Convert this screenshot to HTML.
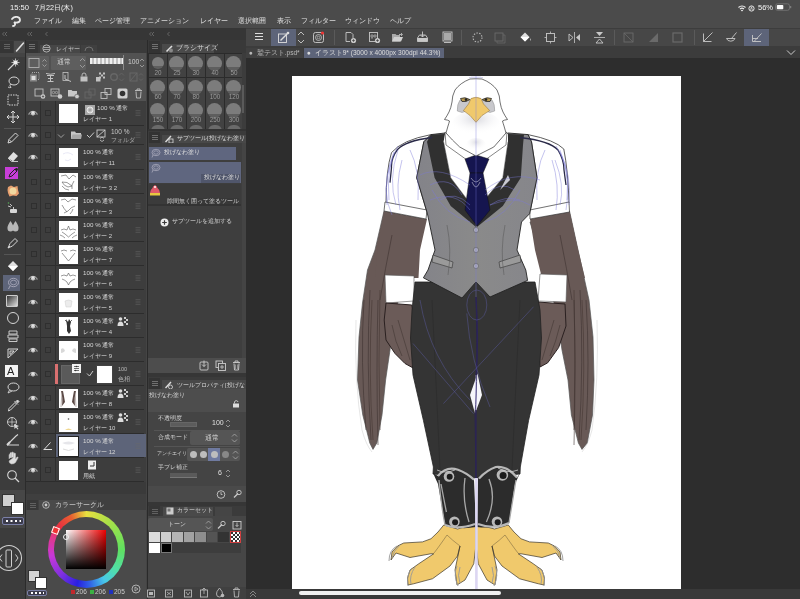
<!DOCTYPE html>
<html><head><meta charset="utf-8">
<style>
*{margin:0;padding:0;box-sizing:border-box}
html,body{width:800px;height:599px;overflow:hidden;background:#2d2d2d;font-family:"Liberation Sans",sans-serif;color:#d8d8d8;position:relative}
.a{position:absolute;display:block}
.t{position:absolute;white-space:nowrap;line-height:1;will-change:transform}
</style></head><body>
<div class="a" style="left:0px;top:0px;width:800px;height:28px;background:#4b4b4b;"></div>
<div class="t" style="left:9.5px;top:3.5px;font-size:7.6px;color:#f4f4f4;">15:50</div>
<div class="t" style="left:35px;top:3.5px;font-size:7.2px;color:#f4f4f4;">7月22日(木)</div>
<svg class="a" style="left:737px;top:3px;" width="20" height="10" viewBox="0 0 20 10"><path d="M1.5 4.5 A5 5 0 0 1 8.5 4.5 M3 6 A3 3 0 0 1 7 6" fill="none" stroke="#eee" stroke-width="1.1"/><path d="M5 8.5 L3.8 7.2 A1.8 1.8 0 0 1 6.2 7.2 Z" fill="#eee"/><circle cx="14.5" cy="5.5" r="2.6" fill="none" stroke="#e8e8e8" stroke-width="1"/><path d="M13.6 6.8 L14.5 3.8 L15.4 6.8" fill="none" stroke="#e8e8e8" stroke-width="0.7"/></svg>
<div class="t" style="left:758px;top:3.5px;font-size:7.5px;color:#f4f4f4;">56%</div>
<svg class="a" style="left:775px;top:3px;" width="18" height="9" viewBox="0 0 18 9"><rect x="0.5" y="0.8" width="14" height="6.5" rx="2" fill="none" stroke="#777" stroke-width="0.8"/><rect x="1.8" y="2" width="6.5" height="4.2" rx="0.8" fill="#fafafa"/><rect x="15.2" y="3" width="1" height="2.2" fill="#888"/></svg>
<svg class="a" style="left:10px;top:16px;" width="12" height="11" viewBox="0 0 12 11"><path d="M2 3 C4 0,10 0,10 4 C10 7,5 7,4 6 C6 8,5 10,3 10" fill="none" stroke="#e8e8e8" stroke-width="1.8" stroke-linecap="round"/></svg>
<div class="t" style="left:34px;top:17.5px;font-size:6.9px;color:#e0e0e0;">ファイル</div>
<div class="t" style="left:72px;top:17.5px;font-size:6.9px;color:#e0e0e0;">編集</div>
<div class="t" style="left:95px;top:17.5px;font-size:6.9px;color:#e0e0e0;">ページ管理</div>
<div class="t" style="left:140px;top:17.5px;font-size:6.9px;color:#e0e0e0;">アニメーション</div>
<div class="t" style="left:200px;top:17.5px;font-size:6.9px;color:#e0e0e0;">レイヤー</div>
<div class="t" style="left:238px;top:17.5px;font-size:6.9px;color:#e0e0e0;">選択範囲</div>
<div class="t" style="left:277px;top:17.5px;font-size:6.9px;color:#e0e0e0;">表示</div>
<div class="t" style="left:301px;top:17.5px;font-size:6.9px;color:#e0e0e0;">フィルター</div>
<div class="t" style="left:345px;top:17.5px;font-size:6.9px;color:#e0e0e0;">ウィンドウ</div>
<div class="t" style="left:390px;top:17.5px;font-size:6.9px;color:#e0e0e0;">ヘルプ</div>
<div class="a" style="left:0px;top:28px;width:246px;height:12px;background:#363636;"></div>
<svg class="a" style="left:1px;top:31px;" width="8" height="6" viewBox="0 0 8 6"><path d="M3.5 1 L1.5 3 L3.5 5 M6 1 L4 3 L6 5" fill="none" stroke="#7a7a7a" stroke-width="0.7"/></svg>
<svg class="a" style="left:26px;top:31px;" width="8" height="6" viewBox="0 0 8 6"><path d="M3.5 1 L1.5 3 L3.5 5 M6 1 L4 3 L6 5" fill="none" stroke="#7a7a7a" stroke-width="0.7"/></svg>
<svg class="a" style="left:148px;top:31px;" width="8" height="6" viewBox="0 0 8 6"><path d="M3.5 1 L1.5 3 L3.5 5 M6 1 L4 3 L6 5" fill="none" stroke="#7a7a7a" stroke-width="0.7"/></svg>
<svg class="a" style="left:44px;top:31px;" width="5" height="6" viewBox="0 0 5 6"><path d="M3.5 1 L1.5 3 L3.5 5" fill="none" stroke="#7a7a7a" stroke-width="0.7"/></svg>
<svg class="a" style="left:166px;top:31px;" width="5" height="6" viewBox="0 0 5 6"><path d="M3.5 1 L1.5 3 L3.5 5" fill="none" stroke="#7a7a7a" stroke-width="0.7"/></svg>
<div class="a" style="left:0px;top:40px;width:25px;height:559px;background:#3c3c3c;"></div>
<div class="a" style="left:0px;top:40px;width:25px;height:13px;background:#3a3a3a;"></div>
<div class="a" style="left:0px;top:41px;width:13px;height:12px;background:#353535;"></div>
<svg class="a" style="left:3px;top:43px;" width="8" height="7" viewBox="0 0 8 7"><path d="M1 1.5H7M1 3.5H7M1 5.5H7" stroke="#666" stroke-width="0.9"/></svg>
<div class="a" style="left:14px;top:41px;width:11px;height:12px;background:#4b4b4b;"></div>
<svg class="a" style="left:14px;top:41px;" width="11" height="12" viewBox="0 0 11 12"><path d="M2.5 10 L9.5 2" stroke="#e0e0e0" stroke-width="1.5" stroke-linecap="round"/></svg>
<div class="a" style="left:0px;top:53px;width:25px;height:4px;background:#444444;"></div>
<div class="a" style="left:25px;top:40px;width:1px;height:559px;background:#2b2b2b;"></div>
<svg class="a" style="left:5.5px;top:58.0px;" width="14" height="14" viewBox="0 0 14 14"><path d="M2 12 L8 6" stroke="#d6d6d6" stroke-width="1.1"/><circle cx="9.5" cy="4.5" r="2.3" fill="#eee"/><path d="M9.5 0.5V2M9.5 7V8.5M5.5 4.5H7M12 4.5H13.5M6.8 1.8L7.8 2.8M11.2 6.2L12.2 7.2M12.2 1.8L11.2 2.8" stroke="#d6d6d6" stroke-width="0.8"/></svg>
<svg class="a" style="left:5.5px;top:75.0px;" width="14" height="14" viewBox="0 0 14 14"><ellipse cx="8" cy="6" rx="5" ry="4" fill="none" stroke="#d6d6d6" stroke-width="1"/><path d="M4.5 9 Q3 11 5 12.5 Q3.5 13 2 12" fill="none" stroke="#d6d6d6" stroke-width="0.9"/></svg>
<svg class="a" style="left:5.5px;top:93.0px;" width="14" height="14" viewBox="0 0 14 14"><rect x="2" y="2" width="10" height="10" fill="none" stroke="#d6d6d6" stroke-width="1" stroke-dasharray="1.5 1"/></svg>
<svg class="a" style="left:5.5px;top:110.0px;" width="14" height="14" viewBox="0 0 14 14"><path d="M7 1V13M1 7H13" stroke="#d6d6d6" stroke-width="1"/><path d="M5 3L7 1L9 3M5 11L7 13L9 11M3 5L1 7L3 9M11 5L13 7L11 9" fill="none" stroke="#d6d6d6" stroke-width="1"/></svg>
<div class="a" style="left:4px;top:128px;width:17px;height:1px;background:#555;"></div>
<svg class="a" style="left:5.5px;top:131.0px;" width="14" height="14" viewBox="0 0 14 14"><path d="M2 12 L3 8.5 L9.5 2 L12 4.5 L5.5 11 Z M3 8.5 L5.5 11" fill="none" stroke="#d6d6d6" stroke-width="1"/></svg>
<svg class="a" style="left:5.5px;top:149.0px;" width="14" height="14" viewBox="0 0 14 14"><path d="M2 9 L7.5 3 L12 7 L7 12.5 Z" fill="#e0e0e0"/><path d="M2 9 L5.5 12.5 H12" fill="none" stroke="#d6d6d6" stroke-width="0.9"/></svg>
<div class="a" style="left:5px;top:167px;width:13px;height:12px;background:#c83ed8;"></div>
<svg class="a" style="left:5.5px;top:166.0px;" width="14" height="14" viewBox="0 0 14 14"><path d="M3 11 L4 8 L9 3 L11 5 L6 10 Z" fill="none" stroke="#222" stroke-width="1"/><circle cx="10.5" cy="3.5" r="1.4" fill="#222"/></svg>
<svg class="a" style="left:5.5px;top:184.0px;" width="14" height="14" viewBox="0 0 14 14"><path d="M2 3 L5 1.5 L8 3 L11.5 2 L12 6 L13 9.5 L10.5 12 L7 11.5 L3.5 12.5 L2 9 L1.5 6 Z" fill="#e8a070"/><circle cx="7" cy="7" r="3.5" fill="#f0d8a0"/></svg>
<svg class="a" style="left:5.5px;top:201.0px;" width="14" height="14" viewBox="0 0 14 14"><rect x="4" y="8" width="7" height="4" rx="1" fill="#d6d6d6"/><path d="M7.5 8 V6 M4 3 L6 5 M2 5 L5 6" stroke="#d6d6d6" stroke-width="0.9"/><circle cx="2.5" cy="2" r="0.8" fill="#5a5"/></svg>
<svg class="a" style="left:5.5px;top:219.0px;" width="14" height="14" viewBox="0 0 14 14"><path d="M4.5 2 Q8 7 7.5 9.5 A3 3 0 0 1 1.5 9.5 Q1 7 4.5 2 Z M9.5 2 Q13 7 12.5 9.5 A3 3 0 0 1 6.5 9.5 Q6 7 9.5 2 Z" fill="#b8b8b8"/></svg>
<svg class="a" style="left:5.5px;top:236.0px;" width="14" height="14" viewBox="0 0 14 14"><path d="M2 12 L4 7.5 L9 2.5 L11.5 5 L6.5 10 Z" fill="none" stroke="#d6d6d6" stroke-width="1"/><path d="M2 12 L4 10" stroke="#d6d6d6" stroke-width="1"/></svg>
<div class="a" style="left:4px;top:254px;width:17px;height:1px;background:#555;"></div>
<svg class="a" style="left:5.5px;top:259.0px;" width="14" height="14" viewBox="0 0 14 14"><path d="M2 7 L7 2 L12 7 L7 12 Z" fill="#e0e0e0"/><path d="M2 7 H12 L7 12 Z" fill="#ffffff"/></svg>
<div class="a" style="left:3px;top:275px;width:17px;height:16px;background:#5d6479;"></div>
<svg class="a" style="left:5.5px;top:276.0px;" width="14" height="14" viewBox="0 0 14 14"><ellipse cx="7.5" cy="6.5" rx="5" ry="4.2" fill="none" stroke="#aab" stroke-width="0.9"/><ellipse cx="7.5" cy="6.5" rx="3" ry="2.3" fill="none" stroke="#aab" stroke-width="0.8"/><path d="M4 10 L2.5 13" stroke="#aab" stroke-width="0.9"/></svg>
<div class="a" style="left:6px;top:295px;width:12px;height:12px;background:linear-gradient(135deg,#333,#ddd);border:1px solid #ccc;border-radius:1px"></div>
<svg class="a" style="left:5.5px;top:311.0px;" width="14" height="14" viewBox="0 0 14 14"><circle cx="7" cy="7" r="5.5" fill="none" stroke="#d6d6d6" stroke-width="1"/></svg>
<svg class="a" style="left:5.5px;top:329.0px;" width="14" height="14" viewBox="0 0 14 14"><path d="M3 2H11V5H3Z M2 6H12V9H2Z M3 10H11V12.5H3Z" fill="none" stroke="#d6d6d6" stroke-width="0.9"/></svg>
<svg class="a" style="left:5.5px;top:346.0px;" width="14" height="14" viewBox="0 0 14 14"><path d="M2 3 H12 L2 12 Z M4 5 H8 L4 8.5 Z" fill="none" stroke="#d6d6d6" stroke-width="1"/></svg>
<div class="a" style="left:5px;top:365px;width:13px;height:12px;background:#f4f4f4;"></div>
<div class="t" style="left:7px;top:366px;font-size:11px;color:#222;font-weight:normal">A</div>
<svg class="a" style="left:5.5px;top:381.0px;" width="14" height="14" viewBox="0 0 14 14"><ellipse cx="7.5" cy="6" rx="5.5" ry="4" fill="none" stroke="#d6d6d6" stroke-width="1"/><path d="M3.5 9 L2 12 L6 10" fill="none" stroke="#d6d6d6" stroke-width="0.9"/></svg>
<svg class="a" style="left:5.5px;top:399.0px;" width="14" height="14" viewBox="0 0 14 14"><path d="M2.5 12 L3 9.5 L9 3.5 L10.5 5 L4.5 11 Z" fill="none" stroke="#d6d6d6" stroke-width="1"/><path d="M8.5 2 L12 5.5 M10 2.5 L11.5 1 L13 2.5 L11.5 4" fill="#d6d6d6" stroke="#d6d6d6" stroke-width="1"/></svg>
<svg class="a" style="left:5.5px;top:416.0px;" width="14" height="14" viewBox="0 0 14 14"><circle cx="6" cy="6" r="4.5" fill="none" stroke="#d6d6d6" stroke-width="0.9"/><path d="M1.5 6H10.5M6 1.5V10.5" stroke="#d6d6d6" stroke-width="0.7"/><path d="M8 8 L13 10 L11 11 L12.5 13 L11.5 13.5 L10 11.5 L8.5 13 Z" fill="#d6d6d6"/></svg>
<svg class="a" style="left:5.5px;top:433.0px;" width="14" height="14" viewBox="0 0 14 14"><path d="M1 12 H13 M2 11 L10 3 L12 1.5" stroke="#d6d6d6" stroke-width="1.1" fill="none"/><path d="M1 12 L4 9" stroke="#d6d6d6" stroke-width="2"/></svg>
<svg class="a" style="left:5.5px;top:451.0px;" width="14" height="14" viewBox="0 0 14 14"><path d="M3 8 V4 Q3 3 4 3.5 V7 M4 7 V2 Q4.5 1 5.5 2 V6.5 M5.5 6.5 V1.5 Q6.5 0.5 7.5 1.5 V6.5 M7.5 6.5 V2.5 Q8.5 1.5 9.5 2.5 V8 L11 6 Q12.5 5.5 12 7 L9.5 11.5 Q8 13 5.5 13 Q3 12.5 3 10 Z" fill="#ddd" stroke="#bbb" stroke-width="0.5"/></svg>
<svg class="a" style="left:5.5px;top:469.0px;" width="14" height="14" viewBox="0 0 14 14"><circle cx="6" cy="6" r="4.3" fill="none" stroke="#d6d6d6" stroke-width="1.1"/><path d="M9 9 L13 13" stroke="#d6d6d6" stroke-width="1.3"/></svg>
<div class="a" style="left:0px;top:490px;width:25px;height:38px;background:#474747;"></div>
<div class="a" style="left:2px;top:494px;width:13px;height:13px;background:#d0d0d0;border:1px solid #333"></div>
<div class="a" style="left:11px;top:502px;width:13px;height:13px;background:#ffffff;border:1px solid #333"></div>
<div class="a" style="left:2px;top:517px;width:22px;height:8px;background:#3b3b4b;border:1px solid #7b80a8;border-radius:2px"></div>
<svg class="a" style="left:3px;top:518px;" width="20" height="6" viewBox="0 0 20 6"><path d="M3 3H5M7.5 3H9.5M12 3H14M16.5 3H18" stroke="#fff" stroke-width="2"/></svg>
<svg class="a" style="left:-10px;top:540px;" width="38" height="38" viewBox="0 0 38 38"><circle cx="19" cy="18" r="12.5" fill="none" stroke="#cfcfcf" stroke-width="1.1"/><rect x="16" y="10" width="5.5" height="17" rx="1" fill="none" stroke="#cfcfcf" stroke-width="1"/><path d="M12 14.5 L9.5 18 L12 21.5 M25.5 14.5 L28 18 L25.5 21.5" fill="none" stroke="#cfcfcf" stroke-width="1"/></svg>
<div class="a" style="left:26px;top:40px;width:121px;height:559px;background:#444444;"></div>
<div class="a" style="left:26px;top:40px;width:121px;height:13px;background:#3a3a3a;"></div>
<div class="a" style="left:26px;top:41px;width:12px;height:12px;background:#353535;"></div>
<svg class="a" style="left:28px;top:43px;" width="8" height="7" viewBox="0 0 8 7"><path d="M1 1.5H7M1 3.5H7M1 5.5H7" stroke="#777" stroke-width="0.9"/></svg>
<div class="a" style="left:40px;top:44.5px;width:40px;height:8.5px;background:#474747;"></div>
<svg class="a" style="left:42px;top:44px;" width="9" height="9" viewBox="0 0 9 9"><circle cx="4.5" cy="4.5" r="3.6" fill="none" stroke="#bbb" stroke-width="0.9"/><path d="M1.5 3.5H7.5M1.5 5.5H7.5" stroke="#bbb" stroke-width="0.8"/></svg>
<div class="t" style="left:56px;top:45.5px;font-size:6px;color:#c8c8c8;">レイヤー</div>
<div class="a" style="left:81px;top:44.5px;width:16px;height:8.5px;background:#404040;"></div>
<svg class="a" style="left:84px;top:45px;" width="10" height="7" viewBox="0 0 10 7"><path d="M1 6 A4 4 0 0 1 9 6" fill="none" stroke="#777" stroke-width="0.9"/></svg>
<div class="a" style="left:147px;top:40px;width:1px;height:559px;background:#2a2a2a;"></div>
<div class="a" style="left:26px;top:53px;width:120px;height:48px;background:#525252;"></div>
<div class="a" style="left:26.5px;top:56px;width:22.5px;height:13.5px;background:#5e5e5e;border-radius:1px"></div>
<svg class="a" style="left:27px;top:56px;" width="22" height="14" viewBox="0 0 22 14"><rect x="2" y="2.5" width="10" height="9" fill="none" stroke="#b0b0b0" stroke-width="0.9"/><path d="M15.5 5.5 L17.5 3.5 L19.5 5.5 M15.5 8.5 L17.5 10.5 L19.5 8.5" fill="none" stroke="#aaa" stroke-width="0.8"/></svg>
<div class="a" style="left:51px;top:56px;width:35px;height:13.5px;background:#5e5e5e;border-radius:1px"></div>
<div class="t" style="left:57px;top:59px;font-size:6.8px;color:#cfcfcf;">通常</div>
<svg class="a" style="left:79px;top:56px;" width="7" height="14" viewBox="0 0 7 14"><path d="M1 5 L3.5 2.5 L6 5 M1 9 L3.5 11.5 L6 9" fill="none" stroke="#aaa" stroke-width="0.8"/></svg>
<div class="a" style="left:89.5px;top:58px;width:33px;height:6px;background:repeating-linear-gradient(90deg,#f0f0f0 0 2px,#c0c0c0 2px 4px),#ddd"></div>
<div class="a" style="left:122.5px;top:55px;width:1.5px;height:15px;background:#8a8a8a;"></div>
<div class="t" style="left:128px;top:59px;font-size:6.8px;color:#d0d0d0;">100</div>
<svg class="a" style="left:139px;top:56px;" width="6" height="14" viewBox="0 0 6 14"><path d="M1 5 L3 3 L5 5 M1 9 L3 11 L5 9" fill="none" stroke="#aaa" stroke-width="0.8"/></svg>
<svg class="a" style="left:29px;top:72px;" width="11" height="10" viewBox="0 0 11 10"><rect x="3" y="0.5" width="7" height="7" fill="none" stroke="#c2c2c2" stroke-width="0.8" stroke-dasharray="1 1"/><rect x="1" y="2.5" width="7" height="7" fill="#888"/><rect x="2.5" y="4" width="4" height="4" fill="#ddd"/></svg>
<svg class="a" style="left:45px;top:72px;" width="11" height="10" viewBox="0 0 11 10"><path d="M1 1.5 Q5.5 3 10 1.5 M2 3.5H9 M5.5 3.5V9.5 M3 6.5H8 M2.5 9.5H8.5" fill="none" stroke="#c2c2c2" stroke-width="1"/></svg>
<svg class="a" style="left:62px;top:72px;" width="11" height="10" viewBox="0 0 11 10"><rect x="1" y="0.5" width="5" height="8" fill="none" stroke="#c2c2c2" stroke-width="0.8"/><path d="M3 3 L3 7 L9 9.5" fill="none" stroke="#c2c2c2" stroke-width="1"/></svg>
<svg class="a" style="left:79px;top:72px;" width="10" height="10" viewBox="0 0 10 10"><rect x="1.5" y="4.5" width="7" height="5" fill="#c2c2c2"/><path d="M3 4.5 V3 A2 2 0 0 1 7 3 V4.5" fill="none" stroke="#c2c2c2" stroke-width="0.9"/></svg>
<svg class="a" style="left:95px;top:72px;" width="11" height="10" viewBox="0 0 11 10"><path d="M4 0.5h2v2h-2zM8 0.5h2v2h-2zM6 2.5h2v2h-2zM4 4.5h2v2h-2zM8 4.5h2v2h-2z" fill="#c2c2c2"/><rect x="1" y="5" width="4.5" height="4.5" fill="#c2c2c2"/></svg>
<svg class="a" style="left:110px;top:72px;" width="16" height="10" viewBox="0 0 16 10"><circle cx="4" cy="5" r="3.3" fill="none" stroke="#676767" stroke-width="1.4"/><path d="M9 3.5 L11.5 1 L14 3.5 M9 6.5 L11.5 9 L14 6.5" fill="none" stroke="#676767" stroke-width="0.8"/></svg>
<svg class="a" style="left:129px;top:72px;" width="16" height="10" viewBox="0 0 16 10"><rect x="1" y="1" width="7" height="8" fill="none" stroke="#676767" stroke-width="1"/><path d="M1 9 L8 1" stroke="#676767" stroke-width="1"/><path d="M10 3.5 L12 1.5 L14 3.5 M10 6.5 L12 8.5 L14 6.5" fill="none" stroke="#676767" stroke-width="0.8"/></svg>
<svg class="a" style="left:34px;top:88px;" width="12" height="11" viewBox="0 0 12 11"><rect x="1" y="1" width="8" height="7" fill="none" stroke="#c2c2c2" stroke-width="0.9"/><circle cx="9" cy="8.5" r="2.3" fill="#ccc"/><path d="M9 7.3V9.7M7.8 8.5H10.2" stroke="#444" stroke-width="0.7"/></svg>
<svg class="a" style="left:50px;top:88px;" width="13" height="11" viewBox="0 0 13 11"><rect x="1" y="1" width="8" height="7" fill="none" stroke="#c2c2c2" stroke-width="0.9"/><circle cx="3.5" cy="4.5" r="1.2" fill="none" stroke="#c2c2c2" stroke-width="0.6"/><circle cx="6.5" cy="4.5" r="1.2" fill="none" stroke="#c2c2c2" stroke-width="0.6"/><circle cx="10" cy="8.5" r="2.3" fill="#ccc"/></svg>
<svg class="a" style="left:67px;top:88px;" width="13" height="11" viewBox="0 0 13 11"><path d="M1 2 H4.5 L5.5 3 H10 V8.5 H1 Z" fill="#c8c8c8"/><circle cx="10" cy="8.5" r="2.3" fill="#ccc" stroke="#525252" stroke-width="0.6"/></svg>
<svg class="a" style="left:84px;top:88px;" width="12" height="11" viewBox="0 0 12 11"><rect x="1" y="4" width="6" height="6" fill="none" stroke="#676767" stroke-width="0.9"/><rect x="5" y="1" width="6" height="6" fill="none" stroke="#676767" stroke-width="0.9"/></svg>
<svg class="a" style="left:100px;top:88px;" width="12" height="11" viewBox="0 0 12 11"><rect x="1" y="4.5" width="6" height="6" fill="none" stroke="#c2c2c2" stroke-width="0.9"/><rect x="5" y="0.5" width="6" height="6" fill="none" stroke="#c2c2c2" stroke-width="0.9"/></svg>
<svg class="a" style="left:117px;top:88px;" width="11" height="11" viewBox="0 0 11 11"><rect x="0.5" y="0.5" width="10" height="10" rx="1.5" fill="#d0d0d0"/><circle cx="5.5" cy="5.5" r="2.8" fill="#333"/></svg>
<svg class="a" style="left:134px;top:88px;" width="9" height="11" viewBox="0 0 9 11"><path d="M1 2.5H8 M3 2.5V1H6V2.5 M2 3.5 L2.5 10H6.5 L7 3.5" fill="none" stroke="#c2c2c2" stroke-width="0.9"/></svg>
<div class="a" style="left:26px;top:101px;width:120px;height:381px;background:#3d3d3d;"></div>
<div class="a" style="left:26px;top:125px;width:117.5px;height:1px;background:#2c2c2c;"></div>
<div class="a" style="left:40px;top:101px;width:1px;height:25px;background:#2e2e2e;"></div>
<div class="a" style="left:55px;top:101px;width:1px;height:25px;background:#2e2e2e;"></div>
<svg class="a" style="left:27px;top:109px;" width="12" height="8" viewBox="0 0 12 8"><path d="M1.5 5 Q6 -0.5 10.5 5" fill="none" stroke="#d4d4d4" stroke-width="1"/><circle cx="6" cy="4.6" r="2" fill="#e6e6e6"/><path d="M1.5 5.2H10.5" stroke="#9a9a9a" stroke-width="0.6"/></svg>
<div class="a" style="left:44.5px;top:110px;width:6px;height:6px;border:1px solid #2f2f2f"></div>
<div class="a" style="left:58.5px;top:104px;width:19px;height:19px;background:#ffffff;"></div>
<div class="t" style="left:97px;top:104.8px;font-size:6.25px;color:#d8d8d8;">100 % 通常</div>
<div class="t" style="left:83px;top:115.5px;font-size:6px;color:#d4d4d4;">レイヤー 1</div>
<svg class="a" style="left:135px;top:110px;" width="6" height="6" viewBox="0 0 6 6"><path d="M0.5 0.75H5.5M0.5 3H5.5M0.5 5.25H5.5" stroke="#6a6a6a" stroke-width="0.6"/></svg>
<div class="a" style="left:26px;top:144px;width:117.5px;height:1px;background:#2c2c2c;"></div>
<div class="a" style="left:40px;top:126px;width:1px;height:19px;background:#2e2e2e;"></div>
<div class="a" style="left:55px;top:126px;width:1px;height:19px;background:#2e2e2e;"></div>
<svg class="a" style="left:27px;top:131px;" width="12" height="8" viewBox="0 0 12 8"><path d="M1.5 5 Q6 -0.5 10.5 5" fill="none" stroke="#d4d4d4" stroke-width="1"/><circle cx="6" cy="4.6" r="2" fill="#e6e6e6"/><path d="M1.5 5.2H10.5" stroke="#9a9a9a" stroke-width="0.6"/></svg>
<div class="a" style="left:44.5px;top:132px;width:6px;height:6px;border:1px solid #2f2f2f"></div>
<svg class="a" style="left:57px;top:133px;" width="8" height="6" viewBox="0 0 8 6"><path d="M1 1.5 L4 4.5 L7 1.5" fill="none" stroke="#aaa" stroke-width="0.9"/></svg>
<svg class="a" style="left:70px;top:130px;" width="12" height="10" viewBox="0 0 12 10"><path d="M1 1.5 H5 L6 3 H11 V9 H1 Z" fill="#c8c8c8"/><path d="M1 9 L2.5 4.5 H12 L11 9 Z" fill="#a8a8a8"/></svg>
<svg class="a" style="left:86px;top:131px;" width="9" height="8" viewBox="0 0 9 8"><path d="M1 4 L3.5 6.5 L8 1.5" fill="none" stroke="#ccc" stroke-width="1"/></svg>
<svg class="a" style="left:96px;top:129px;" width="11" height="13" viewBox="0 0 11 13"><rect x="1" y="1" width="8" height="7" fill="none" stroke="#ccc" stroke-width="0.9"/><path d="M1 8 L9 1" stroke="#ccc" stroke-width="0.9"/><path d="M4 9.5 L6 8 L8 9.5 M4 11 L6 12.5 L8 11" fill="none" stroke="#ccc" stroke-width="0.8"/></svg>
<div class="t" style="left:111px;top:129px;font-size:6.5px;color:#c8c8c8;">100 %</div>
<div class="t" style="left:111px;top:137px;font-size:6px;color:#aaaaaa;">フォルダ</div>
<svg class="a" style="left:135px;top:132px;" width="6" height="6" viewBox="0 0 6 6"><path d="M0.5 0.75H5.5M0.5 3H5.5M0.5 5.25H5.5" stroke="#6a6a6a" stroke-width="0.6"/></svg>
<div class="a" style="left:26px;top:169px;width:117.5px;height:1px;background:#2c2c2c;"></div>
<div class="a" style="left:40px;top:145px;width:1px;height:25px;background:#2e2e2e;"></div>
<div class="a" style="left:55px;top:145px;width:1px;height:25px;background:#2e2e2e;"></div>
<svg class="a" style="left:27px;top:153px;" width="12" height="8" viewBox="0 0 12 8"><path d="M1.5 5 Q6 -0.5 10.5 5" fill="none" stroke="#d4d4d4" stroke-width="1"/><circle cx="6" cy="4.6" r="2" fill="#e6e6e6"/><path d="M1.5 5.2H10.5" stroke="#9a9a9a" stroke-width="0.6"/></svg>
<div class="a" style="left:44.5px;top:154px;width:6px;height:6px;border:1px solid #2f2f2f"></div>
<div class="a" style="left:58.5px;top:148px;width:19px;height:19px;background:#ffffff;"></div>
<svg class="a" style="left:58.5px;top:148px;" width="19" height="19" viewBox="0 0 19 19"><path d="M4 6 Q9 3 14 7 M6 12 Q9 14 12 11" fill="none" stroke="#d8d8ee" stroke-width="0.6"/></svg>
<div class="t" style="left:83px;top:148.8px;font-size:6.25px;color:#d8d8d8;">100 % 通常</div>
<div class="t" style="left:83px;top:159.5px;font-size:6px;color:#d4d4d4;">レイヤー 11</div>
<svg class="a" style="left:135px;top:154px;" width="6" height="6" viewBox="0 0 6 6"><path d="M0.5 0.75H5.5M0.5 3H5.5M0.5 5.25H5.5" stroke="#6a6a6a" stroke-width="0.6"/></svg>
<div class="a" style="left:26px;top:193px;width:117.5px;height:1px;background:#2c2c2c;"></div>
<div class="a" style="left:40px;top:170px;width:1px;height:24px;background:#2e2e2e;"></div>
<div class="a" style="left:55px;top:170px;width:1px;height:24px;background:#2e2e2e;"></div>
<div class="a" style="left:30.5px;top:179px;width:6px;height:6px;border:1px solid #2f2f2f"></div>
<div class="a" style="left:44.5px;top:179px;width:6px;height:6px;border:1px solid #2f2f2f"></div>
<div class="a" style="left:58.5px;top:173px;width:19px;height:19px;background:#ffffff;"></div>
<svg class="a" style="left:58.5px;top:173px;" width="19" height="19" viewBox="0 0 19 19"><path d="M2 3 L7 2 L10 6 L14 2 L17 4 M3 9 Q8 8 13 13 L9 14 Q5 13 3 9 M15 8 Q12 12 13 16 M3 13 Q6 17 10 17" fill="none" stroke="#555" stroke-width="0.6"/></svg>
<div class="t" style="left:83px;top:173.8px;font-size:6.25px;color:#d8d8d8;">100 % 通常</div>
<div class="t" style="left:83px;top:184.5px;font-size:6px;color:#d4d4d4;">レイヤー 3 2</div>
<svg class="a" style="left:135px;top:179px;" width="6" height="6" viewBox="0 0 6 6"><path d="M0.5 0.75H5.5M0.5 3H5.5M0.5 5.25H5.5" stroke="#6a6a6a" stroke-width="0.6"/></svg>
<div class="a" style="left:26px;top:217px;width:117.5px;height:1px;background:#2c2c2c;"></div>
<div class="a" style="left:40px;top:194px;width:1px;height:24px;background:#2e2e2e;"></div>
<div class="a" style="left:55px;top:194px;width:1px;height:24px;background:#2e2e2e;"></div>
<div class="a" style="left:30.5px;top:203px;width:6px;height:6px;border:1px solid #2f2f2f"></div>
<div class="a" style="left:44.5px;top:203px;width:6px;height:6px;border:1px solid #2f2f2f"></div>
<div class="a" style="left:58.5px;top:197px;width:19px;height:19px;background:#ffffff;"></div>
<svg class="a" style="left:58.5px;top:197px;" width="19" height="19" viewBox="0 0 19 19"><path d="M2 3 L6 2 L9 5 L13 2 L17 3 M3 8 Q5 12 8 15 M16 9 Q12 10 9 14 L5 16 M14 12 Q13 15 11 17" fill="none" stroke="#555" stroke-width="0.6"/></svg>
<div class="t" style="left:83px;top:197.8px;font-size:6.25px;color:#d8d8d8;">100 % 通常</div>
<div class="t" style="left:83px;top:208.5px;font-size:6px;color:#d4d4d4;">レイヤー 3</div>
<svg class="a" style="left:135px;top:203px;" width="6" height="6" viewBox="0 0 6 6"><path d="M0.5 0.75H5.5M0.5 3H5.5M0.5 5.25H5.5" stroke="#6a6a6a" stroke-width="0.6"/></svg>
<div class="a" style="left:26px;top:241px;width:117.5px;height:1px;background:#2c2c2c;"></div>
<div class="a" style="left:40px;top:218px;width:1px;height:24px;background:#2e2e2e;"></div>
<div class="a" style="left:55px;top:218px;width:1px;height:24px;background:#2e2e2e;"></div>
<div class="a" style="left:30.5px;top:227px;width:6px;height:6px;border:1px solid #2f2f2f"></div>
<div class="a" style="left:44.5px;top:227px;width:6px;height:6px;border:1px solid #2f2f2f"></div>
<div class="a" style="left:58.5px;top:221px;width:19px;height:19px;background:#ffffff;"></div>
<svg class="a" style="left:58.5px;top:221px;" width="19" height="19" viewBox="0 0 19 19"><path d="M2 9 Q5 7 8 9 L9.5 5 L11 9 Q14 7 17 9 M3 11 L6 13 L9.5 16 L13 13 L16 11 M1 14 Q4 15 6 17 M18 14 Q15 15 13 17" fill="none" stroke="#555" stroke-width="0.6"/></svg>
<div class="t" style="left:83px;top:221.8px;font-size:6.25px;color:#d8d8d8;">100 % 通常</div>
<div class="t" style="left:83px;top:232.5px;font-size:6px;color:#d4d4d4;">レイヤー 2</div>
<svg class="a" style="left:135px;top:227px;" width="6" height="6" viewBox="0 0 6 6"><path d="M0.5 0.75H5.5M0.5 3H5.5M0.5 5.25H5.5" stroke="#6a6a6a" stroke-width="0.6"/></svg>
<div class="a" style="left:26px;top:265px;width:117.5px;height:1px;background:#2c2c2c;"></div>
<div class="a" style="left:40px;top:242px;width:1px;height:24px;background:#2e2e2e;"></div>
<div class="a" style="left:55px;top:242px;width:1px;height:24px;background:#2e2e2e;"></div>
<div class="a" style="left:30.5px;top:251px;width:6px;height:6px;border:1px solid #2f2f2f"></div>
<div class="a" style="left:44.5px;top:251px;width:6px;height:6px;border:1px solid #2f2f2f"></div>
<div class="a" style="left:58.5px;top:245px;width:19px;height:19px;background:#ffffff;"></div>
<svg class="a" style="left:58.5px;top:245px;" width="19" height="19" viewBox="0 0 19 19"><path d="M2 6 Q5 4 8 6 M11 6 Q14 4 17 6 M3 8 L9.5 16 L16 8" fill="none" stroke="#555" stroke-width="0.6"/></svg>
<div class="t" style="left:83px;top:245.8px;font-size:6.25px;color:#d8d8d8;">100 % 通常</div>
<div class="t" style="left:83px;top:256.5px;font-size:6px;color:#d4d4d4;">レイヤー 7</div>
<svg class="a" style="left:135px;top:251px;" width="6" height="6" viewBox="0 0 6 6"><path d="M0.5 0.75H5.5M0.5 3H5.5M0.5 5.25H5.5" stroke="#6a6a6a" stroke-width="0.6"/></svg>
<div class="a" style="left:26px;top:289px;width:117.5px;height:1px;background:#2c2c2c;"></div>
<div class="a" style="left:40px;top:266px;width:1px;height:24px;background:#2e2e2e;"></div>
<div class="a" style="left:55px;top:266px;width:1px;height:24px;background:#2e2e2e;"></div>
<svg class="a" style="left:27px;top:274px;" width="12" height="8" viewBox="0 0 12 8"><path d="M1.5 5 Q6 -0.5 10.5 5" fill="none" stroke="#d4d4d4" stroke-width="1"/><circle cx="6" cy="4.6" r="2" fill="#e6e6e6"/><path d="M1.5 5.2H10.5" stroke="#9a9a9a" stroke-width="0.6"/></svg>
<div class="a" style="left:44.5px;top:275px;width:6px;height:6px;border:1px solid #2f2f2f"></div>
<div class="a" style="left:58.5px;top:269px;width:19px;height:19px;background:#ffffff;"></div>
<svg class="a" style="left:58.5px;top:269px;" width="19" height="19" viewBox="0 0 19 19"><path d="M2 7 Q5 5 8 7 L9.5 4 L11 7 Q14 5 17 7 M3 10 Q6 11 8 13 L9.5 16 L11 13 Q13 11 16 10" fill="none" stroke="#555" stroke-width="0.6"/></svg>
<div class="t" style="left:83px;top:269.8px;font-size:6.25px;color:#d8d8d8;">100 % 通常</div>
<div class="t" style="left:83px;top:280.5px;font-size:6px;color:#d4d4d4;">レイヤー 6</div>
<svg class="a" style="left:135px;top:275px;" width="6" height="6" viewBox="0 0 6 6"><path d="M0.5 0.75H5.5M0.5 3H5.5M0.5 5.25H5.5" stroke="#6a6a6a" stroke-width="0.6"/></svg>
<div class="a" style="left:26px;top:313px;width:117.5px;height:1px;background:#2c2c2c;"></div>
<div class="a" style="left:40px;top:290px;width:1px;height:24px;background:#2e2e2e;"></div>
<div class="a" style="left:55px;top:290px;width:1px;height:24px;background:#2e2e2e;"></div>
<svg class="a" style="left:27px;top:298px;" width="12" height="8" viewBox="0 0 12 8"><path d="M1.5 5 Q6 -0.5 10.5 5" fill="none" stroke="#d4d4d4" stroke-width="1"/><circle cx="6" cy="4.6" r="2" fill="#e6e6e6"/><path d="M1.5 5.2H10.5" stroke="#9a9a9a" stroke-width="0.6"/></svg>
<div class="a" style="left:44.5px;top:299px;width:6px;height:6px;border:1px solid #2f2f2f"></div>
<div class="a" style="left:58.5px;top:293px;width:19px;height:19px;background:#ffffff;"></div>
<svg class="a" style="left:58.5px;top:293px;" width="19" height="19" viewBox="0 0 19 19"><path d="M6 8 Q9.5 6 13 8 L12 14 H7 Z" fill="#ececec" stroke="#ccc" stroke-width="0.5"/></svg>
<div class="t" style="left:83px;top:293.8px;font-size:6.25px;color:#d8d8d8;">100 % 通常</div>
<div class="t" style="left:83px;top:304.5px;font-size:6px;color:#d4d4d4;">レイヤー 5</div>
<svg class="a" style="left:135px;top:299px;" width="6" height="6" viewBox="0 0 6 6"><path d="M0.5 0.75H5.5M0.5 3H5.5M0.5 5.25H5.5" stroke="#6a6a6a" stroke-width="0.6"/></svg>
<div class="a" style="left:26px;top:337px;width:117.5px;height:1px;background:#2c2c2c;"></div>
<div class="a" style="left:40px;top:314px;width:1px;height:24px;background:#2e2e2e;"></div>
<div class="a" style="left:55px;top:314px;width:1px;height:24px;background:#2e2e2e;"></div>
<svg class="a" style="left:27px;top:322px;" width="12" height="8" viewBox="0 0 12 8"><path d="M1.5 5 Q6 -0.5 10.5 5" fill="none" stroke="#d4d4d4" stroke-width="1"/><circle cx="6" cy="4.6" r="2" fill="#e6e6e6"/><path d="M1.5 5.2H10.5" stroke="#9a9a9a" stroke-width="0.6"/></svg>
<div class="a" style="left:44.5px;top:323px;width:6px;height:6px;border:1px solid #2f2f2f"></div>
<div class="a" style="left:58.5px;top:317px;width:19px;height:19px;background:#ffffff;"></div>
<svg class="a" style="left:58.5px;top:317px;" width="19" height="19" viewBox="0 0 19 19"><path d="M7 2 L9 5 L10 2 L12 5 L11 9 L12 14 L10 17 L8 14 L8 9 Z" fill="#333"/><path d="M6 3 L8 5 M13 3 L11 5" stroke="#444" stroke-width="0.8"/></svg>
<div class="t" style="left:83px;top:317.8px;font-size:6.25px;color:#d8d8d8;">100 % 通常</div>
<div class="t" style="left:83px;top:328.5px;font-size:6px;color:#d4d4d4;">レイヤー 4</div>
<svg class="a" style="left:135px;top:323px;" width="6" height="6" viewBox="0 0 6 6"><path d="M0.5 0.75H5.5M0.5 3H5.5M0.5 5.25H5.5" stroke="#6a6a6a" stroke-width="0.6"/></svg>
<div class="a" style="left:26px;top:361px;width:117.5px;height:1px;background:#2c2c2c;"></div>
<div class="a" style="left:40px;top:338px;width:1px;height:24px;background:#2e2e2e;"></div>
<div class="a" style="left:55px;top:338px;width:1px;height:24px;background:#2e2e2e;"></div>
<svg class="a" style="left:27px;top:346px;" width="12" height="8" viewBox="0 0 12 8"><path d="M1.5 5 Q6 -0.5 10.5 5" fill="none" stroke="#d4d4d4" stroke-width="1"/><circle cx="6" cy="4.6" r="2" fill="#e6e6e6"/><path d="M1.5 5.2H10.5" stroke="#9a9a9a" stroke-width="0.6"/></svg>
<div class="a" style="left:44.5px;top:347px;width:6px;height:6px;border:1px solid #2f2f2f"></div>
<div class="a" style="left:58.5px;top:341px;width:19px;height:19px;background:#ffffff;"></div>
<svg class="a" style="left:58.5px;top:341px;" width="19" height="19" viewBox="0 0 19 19"><path d="M2 8 Q5 6 6 10 Q4 12 2 12 Z M17 8 Q14 6 13 10 Q15 12 17 12 Z" fill="#d8d8d8"/></svg>
<div class="t" style="left:83px;top:341.8px;font-size:6.25px;color:#d8d8d8;">100 % 通常</div>
<div class="t" style="left:83px;top:352.5px;font-size:6px;color:#d4d4d4;">レイヤー 9</div>
<svg class="a" style="left:135px;top:347px;" width="6" height="6" viewBox="0 0 6 6"><path d="M0.5 0.75H5.5M0.5 3H5.5M0.5 5.25H5.5" stroke="#6a6a6a" stroke-width="0.6"/></svg>
<div class="a" style="left:26px;top:385px;width:117.5px;height:1px;background:#2c2c2c;"></div>
<div class="a" style="left:40px;top:362px;width:1px;height:24px;background:#2e2e2e;"></div>
<div class="a" style="left:55px;top:362px;width:1px;height:24px;background:#2e2e2e;"></div>
<svg class="a" style="left:27px;top:370px;" width="12" height="8" viewBox="0 0 12 8"><path d="M1.5 5 Q6 -0.5 10.5 5" fill="none" stroke="#d4d4d4" stroke-width="1"/><circle cx="6" cy="4.6" r="2" fill="#e6e6e6"/><path d="M1.5 5.2H10.5" stroke="#9a9a9a" stroke-width="0.6"/></svg>
<div class="a" style="left:44.5px;top:371px;width:6px;height:6px;border:1px solid #2f2f2f"></div>
<div class="a" style="left:55px;top:364px;width:3px;height:20px;background:#d97070;"></div>
<div class="a" style="left:61px;top:365px;width:19px;height:19px;background:#5a5a5a;border:1px solid #666"></div>
<div class="a" style="left:72px;top:364px;width:9px;height:9px;background:#f2f2f2;"></div>
<svg class="a" style="left:72px;top:364px;" width="9" height="9" viewBox="0 0 9 9"><path d="M2 2.5H7M2 4.5H7M2 6.5H7" stroke="#333" stroke-width="0.7"/><circle cx="4.5" cy="2.5" r="0.8" fill="#333"/><circle cx="3.5" cy="6.5" r="0.8" fill="#333"/></svg>
<svg class="a" style="left:86px;top:370px;" width="8" height="7" viewBox="0 0 8 7"><path d="M1 3.5 L3.5 6 L7 1" fill="none" stroke="#ccc" stroke-width="1"/></svg>
<div class="a" style="left:95.5px;top:365px;width:17px;height:19px;background:#ffffff;border:1px solid #444"></div>
<div class="t" style="left:118px;top:367px;font-size:5.5px;color:#bbb;">100</div>
<div class="t" style="left:118px;top:377px;font-size:5.5px;color:#bbb;">色相</div>
<svg class="a" style="left:135px;top:371px;" width="6" height="6" viewBox="0 0 6 6"><path d="M0.5 0.75H5.5M0.5 3H5.5M0.5 5.25H5.5" stroke="#6a6a6a" stroke-width="0.6"/></svg>
<div class="a" style="left:26px;top:409px;width:117.5px;height:1px;background:#2c2c2c;"></div>
<div class="a" style="left:40px;top:386px;width:1px;height:24px;background:#2e2e2e;"></div>
<div class="a" style="left:55px;top:386px;width:1px;height:24px;background:#2e2e2e;"></div>
<svg class="a" style="left:27px;top:394px;" width="12" height="8" viewBox="0 0 12 8"><path d="M1.5 5 Q6 -0.5 10.5 5" fill="none" stroke="#d4d4d4" stroke-width="1"/><circle cx="6" cy="4.6" r="2" fill="#e6e6e6"/><path d="M1.5 5.2H10.5" stroke="#9a9a9a" stroke-width="0.6"/></svg>
<div class="a" style="left:44.5px;top:395px;width:6px;height:6px;border:1px solid #2f2f2f"></div>
<div class="a" style="left:58.5px;top:389px;width:19px;height:19px;background:#ffffff;"></div>
<svg class="a" style="left:58.5px;top:389px;" width="19" height="19" viewBox="0 0 19 19"><path d="M2 2 Q4 8 3 17 L6 13 Q5 7 4 2 Z M17 2 Q15 8 16 17 L13 13 Q14 7 15 2 Z" fill="#5a4844"/><path d="M3 2 L2 18 M16 2 L17 18" stroke="#7a6a66" stroke-width="0.5"/></svg>
<div class="t" style="left:83px;top:389.8px;font-size:6.25px;color:#d8d8d8;">100 % 通常</div>
<div class="t" style="left:83px;top:400.5px;font-size:6px;color:#d4d4d4;">レイヤー 8</div>
<svg class="a" style="left:135px;top:395px;" width="6" height="6" viewBox="0 0 6 6"><path d="M0.5 0.75H5.5M0.5 3H5.5M0.5 5.25H5.5" stroke="#6a6a6a" stroke-width="0.6"/></svg>
<div class="a" style="left:26px;top:433px;width:117.5px;height:1px;background:#2c2c2c;"></div>
<div class="a" style="left:40px;top:410px;width:1px;height:24px;background:#2e2e2e;"></div>
<div class="a" style="left:55px;top:410px;width:1px;height:24px;background:#2e2e2e;"></div>
<svg class="a" style="left:27px;top:418px;" width="12" height="8" viewBox="0 0 12 8"><path d="M1.5 5 Q6 -0.5 10.5 5" fill="none" stroke="#d4d4d4" stroke-width="1"/><circle cx="6" cy="4.6" r="2" fill="#e6e6e6"/><path d="M1.5 5.2H10.5" stroke="#9a9a9a" stroke-width="0.6"/></svg>
<div class="a" style="left:44.5px;top:419px;width:6px;height:6px;border:1px solid #2f2f2f"></div>
<div class="a" style="left:58.5px;top:413px;width:19px;height:19px;background:#ffffff;"></div>
<svg class="a" style="left:58.5px;top:413px;" width="19" height="19" viewBox="0 0 19 19"><circle cx="9.5" cy="6" r="0.8" fill="#555"/><path d="M6 17 Q9.5 14 13 17" fill="#f0d890"/></svg>
<div class="t" style="left:83px;top:413.8px;font-size:6.25px;color:#d8d8d8;">100 % 通常</div>
<div class="t" style="left:83px;top:424.5px;font-size:6px;color:#d4d4d4;">レイヤー 10</div>
<svg class="a" style="left:135px;top:419px;" width="6" height="6" viewBox="0 0 6 6"><path d="M0.5 0.75H5.5M0.5 3H5.5M0.5 5.25H5.5" stroke="#6a6a6a" stroke-width="0.6"/></svg>
<div class="a" style="left:55px;top:434px;width:91px;height:23px;background:#5d6479;"></div>
<div class="a" style="left:26px;top:457px;width:117.5px;height:1px;background:#2c2c2c;"></div>
<div class="a" style="left:40px;top:434px;width:1px;height:24px;background:#2e2e2e;"></div>
<div class="a" style="left:55px;top:434px;width:1px;height:24px;background:#2e2e2e;"></div>
<svg class="a" style="left:27px;top:442px;" width="12" height="8" viewBox="0 0 12 8"><path d="M1.5 5 Q6 -0.5 10.5 5" fill="none" stroke="#d4d4d4" stroke-width="1"/><circle cx="6" cy="4.6" r="2" fill="#e6e6e6"/><path d="M1.5 5.2H10.5" stroke="#9a9a9a" stroke-width="0.6"/></svg>
<svg class="a" style="left:42px;top:441px;" width="11" height="10" viewBox="0 0 11 10"><path d="M1.5 8.5 H10 M2.5 8 L8.5 1.5" fill="none" stroke="#ddd" stroke-width="1"/></svg>
<div class="a" style="left:57.5px;top:436px;width:21px;height:21px;border:1px solid #222"></div>
<div class="a" style="left:58.5px;top:437px;width:19px;height:19px;background:#ffffff;"></div>
<svg class="a" style="left:58.5px;top:437px;" width="19" height="19" viewBox="0 0 19 19"><path d="M3 6 Q9.5 3 16 6 Q9.5 9 3 6 Z" fill="#e6e6ea"/><path d="M4 12 Q9.5 15 15 12" fill="none" stroke="#ddd" stroke-width="1"/></svg>
<div class="t" style="left:83px;top:437.8px;font-size:6.25px;color:#d8d8d8;">100 % 通常</div>
<div class="t" style="left:83px;top:448.5px;font-size:6px;color:#d4d4d4;">レイヤー 12</div>
<svg class="a" style="left:135px;top:443px;" width="6" height="6" viewBox="0 0 6 6"><path d="M0.5 0.75H5.5M0.5 3H5.5M0.5 5.25H5.5" stroke="#6a6a6a" stroke-width="0.6"/></svg>
<div class="a" style="left:26px;top:481px;width:117.5px;height:1px;background:#2c2c2c;"></div>
<div class="a" style="left:40px;top:458px;width:1px;height:24px;background:#2e2e2e;"></div>
<div class="a" style="left:55px;top:458px;width:1px;height:24px;background:#2e2e2e;"></div>
<svg class="a" style="left:27px;top:466px;" width="12" height="8" viewBox="0 0 12 8"><path d="M1.5 5 Q6 -0.5 10.5 5" fill="none" stroke="#d4d4d4" stroke-width="1"/><circle cx="6" cy="4.6" r="2" fill="#e6e6e6"/><path d="M1.5 5.2H10.5" stroke="#9a9a9a" stroke-width="0.6"/></svg>
<div class="a" style="left:44.5px;top:467px;width:6px;height:6px;border:1px solid #2f2f2f"></div>
<div class="a" style="left:58.5px;top:461px;width:19px;height:19px;background:#ffffff;"></div>
<div class="t" style="left:83px;top:472.5px;font-size:6px;color:#d4d4d4;">用紙</div>
<svg class="a" style="left:117px;top:316px;" width="11" height="11" viewBox="0 0 11 11"><circle cx="3.5" cy="3" r="1.8" fill="#ddd"/><path d="M0.5 10 Q0.5 5.5 3.5 5.5 Q6.5 5.5 6.5 10 Z" fill="#ddd"/><path d="M7 1h2v2h-2zM9 3h2v2h-2zM7 5h2v2h-2zM9 7h2v2h-2z" fill="#ccc"/></svg>
<svg class="a" style="left:117px;top:388px;" width="11" height="11" viewBox="0 0 11 11"><circle cx="3.5" cy="3" r="1.8" fill="#ddd"/><path d="M0.5 10 Q0.5 5.5 3.5 5.5 Q6.5 5.5 6.5 10 Z" fill="#ddd"/><path d="M7 1h2v2h-2zM9 3h2v2h-2zM7 5h2v2h-2zM9 7h2v2h-2z" fill="#ccc"/></svg>
<svg class="a" style="left:117px;top:412px;" width="11" height="11" viewBox="0 0 11 11"><circle cx="3.5" cy="3" r="1.8" fill="#ddd"/><path d="M0.5 10 Q0.5 5.5 3.5 5.5 Q6.5 5.5 6.5 10 Z" fill="#ddd"/><path d="M7 1h2v2h-2zM9 3h2v2h-2zM7 5h2v2h-2zM9 7h2v2h-2z" fill="#ccc"/></svg>
<svg class="a" style="left:85px;top:105px;" width="10" height="10" viewBox="0 0 10 10"><rect x="0" y="0" width="10" height="10" fill="#a8a8a8"/><circle cx="5" cy="5" r="3" fill="none" stroke="#eee" stroke-width="0.9"/><rect x="3" y="3" width="4" height="4" fill="none" stroke="#eee" stroke-width="0.6"/></svg>
<svg class="a" style="left:135px;top:467px;" width="6" height="6" viewBox="0 0 6 6"><path d="M0.5 0.75H5.5M0.5 3H5.5M0.5 5.25H5.5" stroke="#6a6a6a" stroke-width="0.6"/></svg>
<svg class="a" style="left:87px;top:460px;" width="10" height="10" viewBox="0 0 10 10"><rect x="1" y="0.5" width="8" height="9" fill="#eee"/><path d="M3 6 H7 V2" fill="none" stroke="#333" stroke-width="1"/></svg>
<div class="a" style="left:26px;top:482px;width:120px;height:12px;background:#3a3a3a;"></div>
<div class="a" style="left:26px;top:494px;width:120px;height:105px;background:#4a4a4a;"></div>
<div class="a" style="left:26px;top:494px;width:120px;height:16px;background:#3f3f3f;"></div>
<div class="a" style="left:27px;top:500px;width:11px;height:10px;background:#383838;"></div>
<svg class="a" style="left:29px;top:502px;" width="8" height="7" viewBox="0 0 8 7"><path d="M1 1.5H7M1 3.5H7M1 5.5H7" stroke="#666" stroke-width="0.9"/></svg>
<div class="a" style="left:39px;top:500px;width:58px;height:10px;background:#4a4a4a;"></div>
<svg class="a" style="left:42px;top:501px;" width="8" height="8" viewBox="0 0 8 8"><circle cx="4" cy="4" r="3.3" fill="none" stroke="#ccc" stroke-width="0.8"/><circle cx="4" cy="4" r="1.4" fill="#ccc"/></svg>
<div class="t" style="left:55px;top:502px;font-size:6.5px;color:#cccccc;">カラーサークル</div>
<div class="a" style="left:47.5px;top:510.5px;width:77px;height:77px;border-radius:50%;background:conic-gradient(from 0deg,#e8e040,#a8e048 40deg,#60e060 90deg,#50e0a8 125deg,#48c8e8 150deg,#3060e8 175deg,#2820e0 195deg,#8030e0 225deg,#c838d8 260deg,#e03888 290deg,#e83040 310deg,#e86030 335deg,#e8e040 360deg)"></div>
<div class="a" style="left:54px;top:517px;width:64px;height:64px;background:#4a4a4a;border-radius:50%"></div>
<div class="a" style="left:66px;top:530px;width:40px;height:39px;background:linear-gradient(to bottom,rgba(0,0,0,0),#000),linear-gradient(to right,#fff,#e00)"></div>
<div class="a" style="left:52px;top:527px;width:7px;height:7px;background:#e33;border:1.5px solid #fff;transform:rotate(20deg)"></div>
<div class="a" style="left:63px;top:534px;width:6px;height:6px;border:1px solid #eee;border-radius:50%"></div>
<div class="a" style="left:28px;top:570px;width:12px;height:12px;background:#d2d2d2;border:1px solid #333"></div>
<div class="a" style="left:35px;top:577px;width:12px;height:12px;background:#ffffff;border:1px solid #333"></div>
<div class="a" style="left:27px;top:590px;width:20px;height:6px;background:#3b3b4b;border:1px solid #7b80a8;border-radius:2px"></div>
<svg class="a" style="left:28px;top:591px;" width="18" height="4" viewBox="0 0 18 4"><path d="M3 2H5M7 2H9M11 2H13M15 2H16" stroke="#fff" stroke-width="2"/></svg>
<div class="a" style="left:71px;top:590px;width:4px;height:4px;background:#c0282d;"></div>
<div class="t" style="left:76px;top:589px;font-size:6.5px;color:#cccccc;">206</div>
<div class="a" style="left:90px;top:590px;width:4px;height:4px;background:#3cb043;"></div>
<div class="t" style="left:95px;top:589px;font-size:6.5px;color:#cccccc;">206</div>
<div class="a" style="left:109px;top:590px;width:4px;height:4px;background:#2030c0;"></div>
<div class="t" style="left:114px;top:589px;font-size:6.5px;color:#cccccc;">205</div>
<svg class="a" style="left:131px;top:584px;" width="10" height="10" viewBox="0 0 10 10"><circle cx="5" cy="5" r="4" fill="none" stroke="#bbb" stroke-width="0.9"/><path d="M4 3 L7 5 L4 7Z" fill="none" stroke="#bbb" stroke-width="0.8"/></svg>
<div class="a" style="left:148px;top:40px;width:98px;height:559px;background:#424242;"></div>
<div class="a" style="left:148px;top:40px;width:98px;height:13px;background:#393939;"></div>
<div class="a" style="left:149px;top:41px;width:11px;height:12px;background:#333333;"></div>
<svg class="a" style="left:151px;top:43px;" width="8" height="7" viewBox="0 0 8 7"><path d="M1 1.5H7M1 3.5H7M1 5.5H7" stroke="#777" stroke-width="0.9"/></svg>
<div class="a" style="left:162px;top:44px;width:52px;height:9px;background:#4a4a4a;"></div>
<svg class="a" style="left:165px;top:44px;" width="9" height="9" viewBox="0 0 9 9"><path d="M1.5 7.5 L7 2" stroke="#ddd" stroke-width="1.6"/><circle cx="6" cy="6.5" r="2" fill="#888"/></svg>
<div class="t" style="left:176px;top:45px;font-size:6.6px;color:#d8d8d8;">ブラシサイズ</div>
<div class="a" style="left:148px;top:53px;width:96px;height:76px;background:#2b2b2b;"></div>
<div class="a" style="left:148.5px;top:54px;width:18px;height:23px;background:#424242;"></div>
<div class="a" style="left:151.5px;top:57px;width:12px;height:12px;border-radius:50%;background:linear-gradient(to bottom,#7c7c7c 0,#7c7c7c 72%,#5e5e5e 72%)"></div>
<div class="t" style="left:148.5px;top:69.5px;font-size:6.3px;color:#9a9a9a;width:18px;text-align:center">20</div>
<div class="a" style="left:167.5px;top:54px;width:18px;height:23px;background:#424242;"></div>
<div class="a" style="left:169.0px;top:56.0px;width:15.0px;height:15.0px;border-radius:50%;background:linear-gradient(to bottom,#7c7c7c 0,#7c7c7c 72%,#5e5e5e 72%)"></div>
<div class="t" style="left:167.5px;top:69.5px;font-size:6.3px;color:#9a9a9a;width:18px;text-align:center">25</div>
<div class="a" style="left:186.5px;top:54px;width:18px;height:23px;background:#424242;"></div>
<div class="a" style="left:188.0px;top:56.0px;width:15.0px;height:15.0px;border-radius:50%;background:linear-gradient(to bottom,#7c7c7c 0,#7c7c7c 72%,#5e5e5e 72%)"></div>
<div class="t" style="left:186.5px;top:69.5px;font-size:6.3px;color:#9a9a9a;width:18px;text-align:center">30</div>
<div class="a" style="left:205.5px;top:54px;width:18px;height:23px;background:#424242;"></div>
<div class="a" style="left:207.0px;top:56.0px;width:15.0px;height:15.0px;border-radius:50%;background:linear-gradient(to bottom,#7c7c7c 0,#7c7c7c 72%,#5e5e5e 72%)"></div>
<div class="t" style="left:205.5px;top:69.5px;font-size:6.3px;color:#9a9a9a;width:18px;text-align:center">40</div>
<div class="a" style="left:224.5px;top:54px;width:18px;height:23px;background:#424242;"></div>
<div class="a" style="left:226.0px;top:56.0px;width:15.0px;height:15.0px;border-radius:50%;background:linear-gradient(to bottom,#7c7c7c 0,#7c7c7c 72%,#5e5e5e 72%)"></div>
<div class="t" style="left:224.5px;top:69.5px;font-size:6.3px;color:#9a9a9a;width:18px;text-align:center">50</div>
<div class="a" style="left:148.5px;top:78px;width:18px;height:23px;background:#424242;"></div>
<div class="a" style="left:150.0px;top:80.0px;width:15.0px;height:15.0px;border-radius:50%;background:linear-gradient(to bottom,#7c7c7c 0,#7c7c7c 72%,#5e5e5e 72%)"></div>
<div class="t" style="left:148.5px;top:93.5px;font-size:6.3px;color:#9a9a9a;width:18px;text-align:center">60</div>
<div class="a" style="left:167.5px;top:78px;width:18px;height:23px;background:#424242;"></div>
<div class="a" style="left:169.0px;top:80.0px;width:15.0px;height:15.0px;border-radius:50%;background:linear-gradient(to bottom,#7c7c7c 0,#7c7c7c 72%,#5e5e5e 72%)"></div>
<div class="t" style="left:167.5px;top:93.5px;font-size:6.3px;color:#9a9a9a;width:18px;text-align:center">70</div>
<div class="a" style="left:186.5px;top:78px;width:18px;height:23px;background:#424242;"></div>
<div class="a" style="left:188.0px;top:80.0px;width:15.0px;height:15.0px;border-radius:50%;background:linear-gradient(to bottom,#7c7c7c 0,#7c7c7c 72%,#5e5e5e 72%)"></div>
<div class="t" style="left:186.5px;top:93.5px;font-size:6.3px;color:#9a9a9a;width:18px;text-align:center">80</div>
<div class="a" style="left:205.5px;top:78px;width:18px;height:23px;background:#424242;"></div>
<div class="a" style="left:207.0px;top:80.0px;width:15.0px;height:15.0px;border-radius:50%;background:linear-gradient(to bottom,#7c7c7c 0,#7c7c7c 72%,#5e5e5e 72%)"></div>
<div class="t" style="left:205.5px;top:93.5px;font-size:6.3px;color:#9a9a9a;width:18px;text-align:center">100</div>
<div class="a" style="left:224.5px;top:78px;width:18px;height:23px;background:#424242;"></div>
<div class="a" style="left:226.0px;top:80.0px;width:15.0px;height:15.0px;border-radius:50%;background:linear-gradient(to bottom,#7c7c7c 0,#7c7c7c 72%,#5e5e5e 72%)"></div>
<div class="t" style="left:224.5px;top:93.5px;font-size:6.3px;color:#9a9a9a;width:18px;text-align:center">120</div>
<div class="a" style="left:148.5px;top:101px;width:18px;height:23px;background:#424242;"></div>
<div class="a" style="left:150.0px;top:103.0px;width:15.0px;height:15.0px;border-radius:50%;background:linear-gradient(to bottom,#7c7c7c 0,#7c7c7c 72%,#5e5e5e 72%)"></div>
<div class="t" style="left:148.5px;top:116.5px;font-size:6.3px;color:#9a9a9a;width:18px;text-align:center">150</div>
<div class="a" style="left:167.5px;top:101px;width:18px;height:23px;background:#424242;"></div>
<div class="a" style="left:169.0px;top:103.0px;width:15.0px;height:15.0px;border-radius:50%;background:linear-gradient(to bottom,#7c7c7c 0,#7c7c7c 72%,#5e5e5e 72%)"></div>
<div class="t" style="left:167.5px;top:116.5px;font-size:6.3px;color:#9a9a9a;width:18px;text-align:center">170</div>
<div class="a" style="left:186.5px;top:101px;width:18px;height:23px;background:#424242;"></div>
<div class="a" style="left:188.0px;top:103.0px;width:15.0px;height:15.0px;border-radius:50%;background:linear-gradient(to bottom,#7c7c7c 0,#7c7c7c 72%,#5e5e5e 72%)"></div>
<div class="t" style="left:186.5px;top:116.5px;font-size:6.3px;color:#9a9a9a;width:18px;text-align:center">200</div>
<div class="a" style="left:205.5px;top:101px;width:18px;height:23px;background:#424242;"></div>
<div class="a" style="left:207.0px;top:103.0px;width:15.0px;height:15.0px;border-radius:50%;background:linear-gradient(to bottom,#7c7c7c 0,#7c7c7c 72%,#5e5e5e 72%)"></div>
<div class="t" style="left:205.5px;top:116.5px;font-size:6.3px;color:#9a9a9a;width:18px;text-align:center">250</div>
<div class="a" style="left:224.5px;top:101px;width:18px;height:23px;background:#424242;"></div>
<div class="a" style="left:226.0px;top:103.0px;width:15.0px;height:15.0px;border-radius:50%;background:linear-gradient(to bottom,#7c7c7c 0,#7c7c7c 72%,#5e5e5e 72%)"></div>
<div class="t" style="left:224.5px;top:116.5px;font-size:6.3px;color:#9a9a9a;width:18px;text-align:center">300</div>
<div class="a" style="left:148.5px;top:124px;width:18px;height:5px;background:#424242;"></div>
<div class="a" style="left:150.5px;top:125px;width:14px;height:6px;background:#6a6a6a;border-radius:7px 7px 0 0"></div>
<div class="a" style="left:167.5px;top:124px;width:18px;height:5px;background:#424242;"></div>
<div class="a" style="left:169.5px;top:125px;width:14px;height:6px;background:#6a6a6a;border-radius:7px 7px 0 0"></div>
<div class="a" style="left:186.5px;top:124px;width:18px;height:5px;background:#424242;"></div>
<div class="a" style="left:188.5px;top:125px;width:14px;height:6px;background:#6a6a6a;border-radius:7px 7px 0 0"></div>
<div class="a" style="left:205.5px;top:124px;width:18px;height:5px;background:#424242;"></div>
<div class="a" style="left:207.5px;top:125px;width:14px;height:6px;background:#6a6a6a;border-radius:7px 7px 0 0"></div>
<div class="a" style="left:224.5px;top:124px;width:18px;height:5px;background:#424242;"></div>
<div class="a" style="left:226.5px;top:125px;width:14px;height:6px;background:#6a6a6a;border-radius:7px 7px 0 0"></div>
<div class="a" style="left:241.5px;top:53px;width:4.5px;height:76px;background:#3c3c3c;"></div>
<div class="a" style="left:242px;top:85px;width:1.8px;height:28px;background:#5a5a5a;"></div>
<div class="a" style="left:148px;top:129px;width:98px;height:2px;background:#333333;"></div>
<div class="a" style="left:148px;top:131px;width:98px;height:12px;background:#3b3b3b;"></div>
<div class="a" style="left:149px;top:132px;width:11px;height:11px;background:#333333;"></div>
<svg class="a" style="left:151px;top:134px;" width="8" height="7" viewBox="0 0 8 7"><path d="M1 1.5H7M1 3.5H7M1 5.5H7" stroke="#777" stroke-width="0.9"/></svg>
<div class="a" style="left:162px;top:135px;width:84px;height:8px;background:#484848;"></div>
<svg class="a" style="left:164px;top:134px;" width="10" height="10" viewBox="0 0 10 10"><path d="M1.5 8 L7 2" stroke="#ddd" stroke-width="1.4"/><rect x="5" y="5" width="4" height="4" fill="none" stroke="#ddd" stroke-width="0.8"/></svg>
<div class="t" style="left:177px;top:136px;font-size:5.8px;color:#d8d8d8;">サブツール[投げなわ塗り</div>
<div class="a" style="left:148px;top:143px;width:98px;height:215px;background:#3e3e3e;"></div>
<div class="a" style="left:149px;top:147px;width:87px;height:13px;background:#5f667f;"></div>
<svg class="a" style="left:151px;top:148px;" width="10" height="10" viewBox="0 0 10 10"><ellipse cx="5" cy="4.5" rx="4" ry="3.2" fill="none" stroke="#aab" stroke-width="0.8"/><ellipse cx="5" cy="4.5" rx="2.3" ry="1.7" fill="none" stroke="#aab" stroke-width="0.7"/><path d="M2 7 L1 9.5" stroke="#aab" stroke-width="0.8"/></svg>
<div class="t" style="left:164px;top:150px;font-size:5.8px;color:#e0e0e0;">投げなわ塗り</div>
<div class="a" style="left:149px;top:162px;width:92px;height:21px;background:#5f667f;"></div>
<svg class="a" style="left:151px;top:163px;" width="10" height="10" viewBox="0 0 10 10"><ellipse cx="5" cy="4.5" rx="4" ry="3.2" fill="none" stroke="#aab" stroke-width="0.8"/><ellipse cx="5" cy="4.5" rx="2.3" ry="1.7" fill="none" stroke="#aab" stroke-width="0.7"/><path d="M2 7 L1 9.5" stroke="#aab" stroke-width="0.8"/></svg>
<div class="a" style="left:201px;top:174px;width:39px;height:9px;background:#50566b;"></div>
<div class="t" style="left:204px;top:175px;font-size:5.6px;color:#e0e0e0;">投げなわ塗り</div>
<div class="a" style="left:148px;top:184px;width:93px;height:20px;background:#3b3b3b;"></div>
<div class="a" style="left:148px;top:204px;width:93px;height:1.5px;background:#333333;"></div>
<svg class="a" style="left:149px;top:184px;" width="12" height="13" viewBox="0 0 12 13"><path d="M6 1 Q8 2 8.5 4 Q11 6 11 9 H1 Q1 6 3.5 4 Q4 2 6 1 Z" fill="#e05a6a"/><rect x="1" y="9" width="10" height="2.5" fill="#e8c840"/><circle cx="6" cy="3" r="1" fill="#fff"/></svg>
<div class="t" style="left:167px;top:198px;font-size:6.3px;color:#d0d0d0;background:#383838">隙間無く囲って塗るツール</div>
<svg class="a" style="left:160px;top:218px;" width="9" height="9" viewBox="0 0 9 9"><circle cx="4.5" cy="4.5" r="4" fill="#eeeeee"/><path d="M4.5 2.2V6.8M2.2 4.5H6.8" stroke="#3a3a3a" stroke-width="1.2"/></svg>
<div class="t" style="left:172px;top:219px;font-size:5.7px;color:#d0d0d0;">サブツールを追加する</div>
<div class="a" style="left:241.5px;top:143px;width:4.5px;height:215px;background:#444444;"></div>
<div class="a" style="left:148px;top:358px;width:98px;height:15px;background:#4d4d4d;"></div>
<svg class="a" style="left:199px;top:360px;" width="11" height="11" viewBox="0 0 11 11"><rect x="1" y="2" width="8" height="8" rx="1" fill="none" stroke="#ccc" stroke-width="0.9"/><path d="M5 0.5V6.5M3 4.5 L5 6.5 L7 4.5" fill="none" stroke="#ccc" stroke-width="0.9"/></svg>
<svg class="a" style="left:215px;top:360px;" width="12" height="11" viewBox="0 0 12 11"><rect x="1" y="1" width="6.5" height="6.5" fill="none" stroke="#ccc" stroke-width="0.9"/><rect x="3.5" y="3.5" width="7" height="7" fill="#4d4d4d" stroke="#ccc" stroke-width="0.9"/><path d="M7 5V9M5 7H9" stroke="#ccc" stroke-width="0.8"/></svg>
<svg class="a" style="left:232px;top:360px;" width="9" height="11" viewBox="0 0 9 11"><path d="M1 2.5H8 M3 2.5V1H6V2.5 M2 3.5 L2.5 10H6.5 L7 3.5" fill="none" stroke="#ccc" stroke-width="0.9"/><path d="M3.5 4.5V9M5.5 4.5V9" stroke="#ccc" stroke-width="0.5"/></svg>
<div class="a" style="left:148px;top:373px;width:98px;height:4px;background:#363636;"></div>
<div class="a" style="left:148px;top:377px;width:98px;height:12px;background:#3b3b3b;"></div>
<div class="a" style="left:149px;top:378px;width:11px;height:11px;background:#333333;"></div>
<svg class="a" style="left:151px;top:380px;" width="8" height="7" viewBox="0 0 8 7"><path d="M1 1.5H7M1 3.5H7M1 5.5H7" stroke="#777" stroke-width="0.9"/></svg>
<div class="a" style="left:162px;top:380px;width:84px;height:9px;background:#484848;"></div>
<svg class="a" style="left:164px;top:380px;" width="10" height="10" viewBox="0 0 10 10"><path d="M1.5 8 L7 2" stroke="#ddd" stroke-width="1.4"/><circle cx="6.5" cy="7" r="2" fill="none" stroke="#ddd" stroke-width="0.8"/></svg>
<div class="t" style="left:177px;top:382.5px;font-size:5.7px;color:#d8d8d8;">ツールプロパティ[投げな</div>
<div class="a" style="left:148px;top:389px;width:98px;height:23px;background:#4d4d4d;"></div>
<div class="t" style="left:149px;top:393px;font-size:5.8px;color:#d8d8d8;">投げなわ塗り</div>
<svg class="a" style="left:232px;top:400px;" width="9" height="8" viewBox="0 0 9 8"><rect x="1" y="3.5" width="6" height="4" fill="#ddd"/><path d="M2.5 3.5 V2 A1.8 1.8 0 0 1 6 2" fill="none" stroke="#ddd" stroke-width="0.8"/></svg>
<div class="a" style="left:148px;top:412px;width:98px;height:88px;background:#444444;"></div>
<div class="t" style="left:158px;top:415px;font-size:6px;color:#d0d0d0;">不透明度</div>
<div class="a" style="left:170px;top:422px;width:27px;height:5px;background:#5c5c5c;border:1px solid #666"></div>
<div class="t" style="left:212px;top:419px;font-size:7px;color:#e0e0e0;">100</div>
<svg class="a" style="left:225px;top:418px;" width="6" height="11" viewBox="0 0 6 11"><path d="M1 4 L3 2 L5 4 M1 7 L3 9 L5 7" fill="none" stroke="#aaa" stroke-width="0.8"/></svg>
<div class="a" style="left:154px;top:430px;width:86px;height:1px;background:#555555;"></div>
<div class="t" style="left:158px;top:435px;font-size:5.8px;color:#d0d0d0;">合成モード</div>
<div class="a" style="left:190px;top:431px;width:50px;height:14px;background:#555555;border-radius:2px"></div>
<div class="t" style="left:205px;top:435px;font-size:6.5px;color:#d0d0d0;">通常</div>
<svg class="a" style="left:231px;top:432px;" width="7" height="12" viewBox="0 0 7 12"><path d="M1 4.5 L3.5 2 L6 4.5 M1 7.5 L3.5 10 L6 7.5" fill="none" stroke="#aaa" stroke-width="0.8"/></svg>
<div class="a" style="left:154px;top:446px;width:86px;height:1px;background:#555555;"></div>
<div class="t" style="left:157px;top:451px;font-size:5.3px;color:#d0d0d0;">アンチエイリ</div>
<div class="a" style="left:187px;top:448px;width:53px;height:13px;background:#555555;border-radius:2px"></div>
<div class="a" style="left:208px;top:448px;width:12px;height:13px;background:#6f7aa0;"></div>
<div class="a" style="left:189.5px;top:451px;width:7px;height:7px;background:#bdbdbd;border-radius:50%"></div>
<div class="a" style="left:199.5px;top:451px;width:7px;height:7px;background:#bdbdbd;border-radius:50%"></div>
<div class="a" style="left:210.5px;top:451px;width:7px;height:7px;background:#bdbdbd;border-radius:50%"></div>
<div class="a" style="left:221.5px;top:451px;width:7px;height:7px;background:#888;border-radius:50%"></div>
<svg class="a" style="left:232px;top:449px;" width="7" height="12" viewBox="0 0 7 12"><path d="M1 4.5 L3.5 2 L6 4.5 M1 7.5 L3.5 10 L6 7.5" fill="none" stroke="#aaa" stroke-width="0.8"/></svg>
<div class="t" style="left:158px;top:465px;font-size:5.8px;color:#d0d0d0;">手ブレ補正</div>
<div class="a" style="left:170px;top:473px;width:27px;height:5px;background:#5a5a5a;border-bottom:1px solid #777"></div>
<div class="t" style="left:218px;top:469px;font-size:7px;color:#e0e0e0;">6</div>
<svg class="a" style="left:225px;top:468px;" width="6" height="11" viewBox="0 0 6 11"><path d="M1 4 L3 2 L5 4 M1 7 L3 9 L5 7" fill="none" stroke="#aaa" stroke-width="0.8"/></svg>
<div class="a" style="left:148px;top:486px;width:98px;height:16px;background:#4a4a4a;"></div>
<svg class="a" style="left:216px;top:489px;" width="10" height="10" viewBox="0 0 10 10"><circle cx="5" cy="5.5" r="3.8" fill="none" stroke="#ccc" stroke-width="0.9"/><path d="M5 3V5.5H6.5" fill="none" stroke="#ccc" stroke-width="0.8"/></svg>
<svg class="a" style="left:232px;top:489px;" width="10" height="10" viewBox="0 0 10 10"><path d="M2 8.5 L6 4.5" stroke="#ccc" stroke-width="1.3"/><circle cx="7" cy="3.5" r="2.2" fill="none" stroke="#ccc" stroke-width="0.9"/></svg>
<div class="a" style="left:148px;top:502px;width:98px;height:4px;background:#363636;"></div>
<div class="a" style="left:148px;top:506px;width:98px;height:10px;background:#3b3b3b;"></div>
<div class="a" style="left:149px;top:506px;width:11px;height:10px;background:#353535;"></div>
<svg class="a" style="left:151px;top:508px;" width="8" height="7" viewBox="0 0 8 7"><path d="M1 1.5H7M1 3.5H7M1 5.5H7" stroke="#666" stroke-width="0.9"/></svg>
<div class="a" style="left:163px;top:507px;width:50px;height:9px;background:#4a4a4a;"></div>
<svg class="a" style="left:166px;top:507px;" width="8" height="8" viewBox="0 0 8 8"><rect x="0.5" y="0.5" width="7" height="7" fill="#ccc"/><rect x="1.5" y="1.5" width="3" height="3" fill="#777"/></svg>
<div class="t" style="left:177px;top:508px;font-size:5.8px;color:#cfcfcf;">カラーセット</div>
<div class="a" style="left:215px;top:507px;width:17px;height:9px;background:#454545;"></div>
<div class="a" style="left:148px;top:516px;width:98px;height:71px;background:#464646;"></div>
<div class="a" style="left:148px;top:518px;width:65px;height:13px;background:#555555;border-radius:2px"></div>
<div class="t" style="left:168px;top:521px;font-size:6.2px;color:#d8d8d8;">トーン</div>
<svg class="a" style="left:205px;top:519px;" width="7" height="12" viewBox="0 0 7 12"><path d="M1 4.5 L3.5 2 L6 4.5 M1 7.5 L3.5 10 L6 7.5" fill="none" stroke="#aaa" stroke-width="0.8"/></svg>
<svg class="a" style="left:216px;top:520px;" width="10" height="10" viewBox="0 0 10 10"><path d="M2 8.5 L6 4.5" stroke="#ccc" stroke-width="1.3"/><circle cx="7" cy="3.5" r="2.2" fill="none" stroke="#ccc" stroke-width="0.9"/></svg>
<svg class="a" style="left:232px;top:520px;" width="10" height="10" viewBox="0 0 10 10"><rect x="1" y="1.5" width="8" height="7.5" fill="none" stroke="#ccc" stroke-width="0.9"/><path d="M5 2.5V6.5M3.5 5 L5 6.5 L6.5 5" fill="none" stroke="#ccc" stroke-width="0.8"/></svg>
<div class="a" style="left:149px;top:532px;width:11px;height:10px;background:#dcdcdc;"></div>
<div class="a" style="left:161px;top:532px;width:10px;height:10px;background:#cdcdcd;"></div>
<div class="a" style="left:172px;top:532px;width:11px;height:10px;background:#b4b4b4;"></div>
<div class="a" style="left:184px;top:532px;width:10px;height:10px;background:#a2a2a2;"></div>
<div class="a" style="left:195px;top:532px;width:11px;height:10px;background:#8e8e8e;"></div>
<div class="a" style="left:207px;top:532px;width:10px;height:10px;background:#545454;"></div>
<div class="a" style="left:218px;top:532px;width:11px;height:10px;background:#333333;"></div>
<div class="a" style="left:230px;top:531px;width:11px;height:12px;border:1px solid #d04040;background:repeating-conic-gradient(#fff 0 25%,#333 0 50%) 0 0/4px 4px"></div>
<div class="a" style="left:149px;top:543px;width:92px;height:10px;background:#3d3d3d;"></div>
<div class="a" style="left:149px;top:543px;width:11px;height:10px;background:#ffffff;"></div>
<div class="a" style="left:161px;top:543px;width:11px;height:10px;background:#000000;border:1px solid #777"></div>
<div class="a" style="left:148px;top:587px;width:98px;height:12px;background:#404040;"></div>
<svg class="a" style="left:146px;top:588px;" width="10" height="10" viewBox="0 0 10 10"><rect x="1.5" y="2" width="7" height="7" fill="none" stroke="#b8b8b8" stroke-width="0.9"/><rect x="3" y="4" width="4" height="3" fill="#b8b8b8"/></svg>
<svg class="a" style="left:164px;top:588px;" width="10" height="10" viewBox="0 0 10 10"><rect x="1.5" y="2" width="7" height="7" fill="none" stroke="#b8b8b8" stroke-width="0.9"/><path d="M3 4 L7 7 M7 4 L3 7" stroke="#b8b8b8" stroke-width="0.8"/></svg>
<svg class="a" style="left:183px;top:588px;" width="10" height="10" viewBox="0 0 10 10"><rect x="1.5" y="2" width="7" height="7" fill="none" stroke="#b8b8b8" stroke-width="0.9"/><path d="M3 4 L5 7 L7 4" fill="none" stroke="#b8b8b8" stroke-width="0.8"/></svg>
<svg class="a" style="left:199px;top:587px;" width="10" height="11" viewBox="0 0 10 11"><rect x="1.5" y="3" width="7" height="7" fill="none" stroke="#b8b8b8" stroke-width="0.9"/><path d="M5 7V1M3 3 L5 1 L7 3" fill="none" stroke="#b8b8b8" stroke-width="0.8"/></svg>
<svg class="a" style="left:215px;top:587px;" width="10" height="11" viewBox="0 0 10 11"><path d="M4.5 1 Q8 5 7.5 7 A3 3 0 0 1 1.5 7 Q1 5 4.5 1 Z" fill="none" stroke="#b8b8b8" stroke-width="0.9"/><circle cx="7.5" cy="8.5" r="1.8" fill="#b8b8b8"/></svg>
<svg class="a" style="left:232px;top:587px;" width="9" height="11" viewBox="0 0 9 11"><path d="M1 2.5H8 M3 2.5V1H6V2.5 M2 3.5 L2.5 10H6.5 L7 3.5" fill="none" stroke="#b8b8b8" stroke-width="0.9"/></svg>
<div class="a" style="left:246px;top:28px;width:554px;height:18px;background:#474747;"></div>
<div class="a" style="left:246px;top:28px;width:554px;height:1px;background:#3d3d3d;"></div>
<svg class="a" style="left:254px;top:32px;" width="10" height="9" viewBox="0 0 10 9"><path d="M1 1.5H9M1 4.5H9M1 7.5H9" stroke="#ddd" stroke-width="1.1"/></svg>
<div class="a" style="left:271px;top:29px;width:25px;height:17px;background:#5d6479;"></div>
<svg class="a" style="left:277px;top:31px;" width="13" height="13" viewBox="0 0 13 13"><rect x="1.5" y="3" width="8" height="8.5" fill="none" stroke="#ddd" stroke-width="0.9"/><path d="M3.5 9.5 L11 2" stroke="#ddd" stroke-width="1.4"/><circle cx="11" cy="2" r="1.3" fill="#ddd"/></svg>
<svg class="a" style="left:297px;top:30px;" width="8" height="15" viewBox="0 0 8 15"><path d="M1 5 L4 2 L7 5 M1 10 L4 13 L7 10" fill="none" stroke="#ccc" stroke-width="0.9"/></svg>
<svg class="a" style="left:312px;top:31px;" width="13" height="13" viewBox="0 0 13 13"><rect x="1.5" y="1.5" width="10" height="10" rx="2" fill="none" stroke="#ccc" stroke-width="0.9"/><circle cx="6.5" cy="6.5" r="3" fill="none" stroke="#ccc" stroke-width="0.8"/><circle cx="6.5" cy="6.5" r="1.3" fill="none" stroke="#ccc" stroke-width="0.6"/><circle cx="10.5" cy="2" r="1.6" fill="#e33"/></svg>
<div class="a" style="left:334px;top:30px;width:1px;height:15px;background:#5a5a5a;"></div>
<svg class="a" style="left:344px;top:31px;" width="13" height="13" viewBox="0 0 13 13"><path d="M2 1.5 H7 L9 3.5 V7" fill="none" stroke="#c8c8c8" stroke-width="0.9"/><path d="M2 1.5 V10.5 H6" fill="none" stroke="#c8c8c8" stroke-width="0.9"/><circle cx="9.5" cy="9.5" r="2.6" fill="#c8c8c8"/><path d="M9.5 8.2V10.8M8.2 9.5H10.8" stroke="#474747" stroke-width="0.8"/></svg>
<svg class="a" style="left:368px;top:31px;" width="13" height="13" viewBox="0 0 13 13"><rect x="1.5" y="1.5" width="8" height="9" fill="none" stroke="#c8c8c8" stroke-width="0.9"/><path d="M3 4 H5 V6 H3 Z M6 4 H8 V6 H6 Z M3 7 H5" fill="none" stroke="#c8c8c8" stroke-width="0.6"/><circle cx="9.5" cy="9.5" r="2.6" fill="#c8c8c8"/><path d="M9.5 8.2V10.8M8.2 9.5H10.8" stroke="#474747" stroke-width="0.8"/></svg>
<svg class="a" style="left:391px;top:31px;" width="13" height="13" viewBox="0 0 13 13"><path d="M1 3 H4.5 L5.5 4 H9 V10.5 H1 Z" fill="#aaa"/><path d="M1 10.5 L3 6 H12 L10 10.5 Z" fill="#d0d0d0"/><path d="M8 3.5 L11 3.5 M10 2 L11.5 3.5 L10 5" fill="none" stroke="#c8c8c8" stroke-width="0.8"/></svg>
<svg class="a" style="left:416px;top:31px;" width="13" height="13" viewBox="0 0 13 13"><path d="M1.5 7 L3.5 4 H9.5 L11.5 7 V10.5 H1.5 Z" fill="none" stroke="#c8c8c8" stroke-width="0.9"/><rect x="1.5" y="7" width="10" height="3.5" fill="#c8c8c8"/><path d="M6.5 0.5 V6 M4.5 4 L6.5 6 L8.5 4" fill="none" stroke="#c8c8c8" stroke-width="0.9"/></svg>
<svg class="a" style="left:441px;top:31px;" width="13" height="13" viewBox="0 0 13 13"><rect x="2" y="1" width="9" height="9" fill="none" stroke="#c8c8c8" stroke-width="0.9"/><rect x="3" y="2" width="7" height="7" fill="#aaa"/><path d="M3 11.5 H10" stroke="#c8c8c8" stroke-width="0.9"/></svg>
<div class="a" style="left:461px;top:30px;width:1px;height:15px;background:#5a5a5a;"></div>
<svg class="a" style="left:471px;top:31px;" width="13" height="13" viewBox="0 0 13 13"><circle cx="6.5" cy="6.5" r="4.5" fill="none" stroke="#b8b8b8" stroke-width="1.1" stroke-dasharray="1.4 1.4"/></svg>
<svg class="a" style="left:493px;top:31px;" width="13" height="13" viewBox="0 0 13 13"><rect x="2" y="2" width="8" height="8" fill="none" stroke="#6a6a6a" stroke-width="0.9"/><path d="M4 10 V12 H12 V4 H10" fill="none" stroke="#6a6a6a" stroke-width="0.7"/></svg>
<svg class="a" style="left:519px;top:31px;" width="13" height="13" viewBox="0 0 13 13"><path d="M1.5 6 L6 1.5 L10.5 6 L6 10.5 Z" fill="#e0e0e0"/><path d="M1.5 6 H10.5 L6 10.5 Z" fill="#fff"/><path d="M11 7 Q12.5 9 11 10" fill="#ddd"/></svg>
<svg class="a" style="left:544px;top:31px;" width="13" height="13" viewBox="0 0 13 13"><rect x="2.5" y="2.5" width="8" height="8" fill="none" stroke="#c8c8c8" stroke-width="0.9"/><path d="M6.5 0.5V2.5M6.5 10.5V12.5M0.5 6.5H2.5M10.5 6.5H12.5" stroke="#c8c8c8" stroke-width="0.8"/></svg>
<svg class="a" style="left:568px;top:31px;" width="13" height="13" viewBox="0 0 13 13"><path d="M1 3 L5 6.5 L1 10 Z" fill="none" stroke="#c8c8c8" stroke-width="0.9"/><path d="M12 3 L8 6.5 L12 10 Z" fill="#c8c8c8"/><path d="M6.5 1V12" stroke="#c8c8c8" stroke-width="0.8"/></svg>
<svg class="a" style="left:593px;top:31px;" width="13" height="13" viewBox="0 0 13 13"><path d="M3 1 L6.5 5 L10 1 Z" fill="#c8c8c8"/><path d="M3 12 L6.5 8 L10 12 Z" fill="none" stroke="#c8c8c8" stroke-width="0.9"/><path d="M1 6.5H12" stroke="#c8c8c8" stroke-width="0.8"/></svg>
<div class="a" style="left:614px;top:30px;width:1px;height:15px;background:#5a5a5a;"></div>
<svg class="a" style="left:622px;top:31px;" width="13" height="13" viewBox="0 0 13 13"><rect x="2" y="2" width="9" height="9" fill="none" stroke="#6a6a6a" stroke-width="0.9"/><path d="M2 2 L11 11" stroke="#6a6a6a" stroke-width="0.8"/></svg>
<svg class="a" style="left:647px;top:31px;" width="13" height="13" viewBox="0 0 13 13"><path d="M2 11 L11 2 V11 Z" fill="#6a6a6a"/></svg>
<svg class="a" style="left:671px;top:31px;" width="13" height="13" viewBox="0 0 13 13"><rect x="2" y="2" width="9" height="9" fill="none" stroke="#6a6a6a" stroke-width="1.2"/></svg>
<div class="a" style="left:694px;top:30px;width:1px;height:15px;background:#5a5a5a;"></div>
<svg class="a" style="left:701px;top:31px;" width="13" height="13" viewBox="0 0 13 13"><path d="M2.5 2.5 V10.5 H10.5 M2.5 10.5 L11.5 1.5" fill="none" stroke="#c8c8c8" stroke-width="0.9"/></svg>
<svg class="a" style="left:725px;top:31px;" width="13" height="13" viewBox="0 0 13 13"><path d="M1.5 7.5 H10 A4.5 4 0 0 1 1.5 7.5 Z M6.5 7.5 L11.5 1.5" fill="none" stroke="#c8c8c8" stroke-width="0.9"/></svg>
<div class="a" style="left:744px;top:29px;width:25px;height:17px;background:#5d6479;"></div>
<svg class="a" style="left:750px;top:31px;" width="13" height="13" viewBox="0 0 13 13"><path d="M2.5 4 V10.5 H11 M2.5 7.5 H8 M4 10.5 L11.5 2.5" fill="none" stroke="#c8c8c8" stroke-width="0.9"/></svg>
<div class="a" style="left:246px;top:46px;width:554px;height:12px;background:#3c3c3c;"></div>
<div class="a" style="left:246px;top:48px;width:57px;height:10px;background:#404040;"></div>
<div class="t" style="left:249px;top:49.5px;font-size:6.6px;color:#b8b8b8;">●&nbsp;&nbsp;鷲テスト.psd*</div>
<div class="a" style="left:304px;top:48px;width:140px;height:10px;background:#5d6479;"></div>
<div class="t" style="left:307px;top:49.5px;font-size:6.6px;color:#dddddd;">●&nbsp;&nbsp;イラスト9* (3000 x 4000px 300dpi 44.3%)</div>
<svg class="a" style="left:786px;top:49px;" width="10" height="7" viewBox="0 0 10 7"><path d="M1 1.5 L5 5.5 L9 1.5" fill="none" stroke="#ccc" stroke-width="1"/></svg>
<div class="a" style="left:246px;top:58px;width:554px;height:531px;background:#2d2d2d;"></div>
<div class="a" style="left:292px;top:76px;width:389px;height:513px;background:#ffffff;"></div>
<div class="a" style="left:246px;top:589px;width:554px;height:10px;background:#393939;"></div>
<div class="a" style="left:299px;top:591px;width:202px;height:4px;background:#f0f0f0;border-radius:2px"></div>
<svg class="a" style="left:249px;top:590px;" width="8" height="8" viewBox="0 0 8 8"><path d="M1 4 L4 1 L7 4 M1 7 L4 4 L7 7" fill="none" stroke="#999" stroke-width="0.8"/></svg>
<svg class="a" style="left:0;top:0" width="800" height="599" viewBox="0 0 800 599"><clipPath id="pg"><rect x="292" y="76" width="389" height="513"/></clipPath><g clip-path="url(#pg)"><defs><radialGradient id="nk" cx="0.5" cy="0.3" r="0.6"><stop offset="0" stop-color="#d8d8de"/><stop offset="1" stop-color="#ffffff" stop-opacity="0"/></radialGradient><linearGradient id="vg" x1="0" x2="1"><stop offset="0" stop-color="#838389"/><stop offset="0.5" stop-color="#8a8a8a"/><stop offset="1" stop-color="#86868b"/></linearGradient></defs><path d="M384 211 L375 250 L367.5 270 L362.5 303 L359 337 L357.5 380 L362.8 415 L369.8 443 L373 449.4 L376.8 443 L382 415 L385.6 380 L390 350 L395 310 L410 270 L422 222 Z" fill="#685956" stroke="#555" stroke-width="0.7"/><path d="M569.5 211 L578 250 L589 300 L593 337 L594 380 L592.5 415 L587.2 443 L582 449.4 L578.4 443 L571.4 415 L568 380 L562 350 L556 310 L545 270 L530 222 Z" fill="#685956" stroke="#555" stroke-width="0.7"/><path d="M372 300 Q368 370 373 440 M380 290 Q378 360 380 430" fill="none" stroke="#4a3c38" stroke-width="0.7"/><path d="M582 300 Q586 370 581 440 M574 290 Q576 360 574 430" fill="none" stroke="#4a3c38" stroke-width="0.7"/><path d="M384 211 L427 219 L420 250 L418.5 278 L375 278 L378 245 Z" fill="#685956"/><path d="M530 219 L569.5 211 L577 245 L585 278 L542 278 L535 250 Z" fill="#685956"/><path d="M385 275 L414 276 L414 301 L386 303 Z" fill="#fff" stroke="#555" stroke-width="0.6"/><path d="M540 274 L567 275 L566 302 L538 301 Z" fill="#fff" stroke="#555" stroke-width="0.6"/><path d="M386 303 L411.8 305 L415 320 L416 335 L412.6 353.5 L414.3 363.5 L412.6 367.7 L405 363.5 L395 353.5 L386 340 L384.2 320 Z" fill="#6b5b58" stroke="#2a2020" stroke-width="1"/><path d="M398 320 Q404 340 410 360 M392 325 Q395 342 402 356" fill="none" stroke="#3a302c" stroke-width="0.5"/><path d="M538 302 L565 304 L566 326 L558.6 347.6 L547.7 362.8 L540 367 L538 343 L534.7 326 L538 308.6 Z" fill="#6b5b58" stroke="#2a2020" stroke-width="1"/><path d="M554 320 Q548 340 542 360 M560 325 Q556 342 550 356" fill="none" stroke="#3a302c" stroke-width="0.5"/><path d="M415 282 L535 282 L540 310 L541.5 338 L539 375 L528.6 420.3 L520.3 467 L520 474 L477 478 L476 478 L433 474 L433.4 467 L423.4 420.3 L413 375 L410.5 338 L412 310 Z" fill="#343434" stroke="#222" stroke-width="0.8"/><path d="M477.5 373.5 L482 395 L475 413.6 L470 395 Z" fill="#f6f6fa"/><path d="M476 297 Q478 380 475 414 L476 478" fill="none" stroke="#2a2450" stroke-width="1"/><path d="M432 300 Q436 380 440 470 M520 300 Q516 380 512 470" fill="none" stroke="#2a2a2a" stroke-width="0.6"/><g><path d="M443.75 525 L438 532 L431 538.75 L422.5 541.9 L403.75 543 L397.5 546 L392 552 L391 560 L396 553 L410 557.5 L431 553.75 L433.75 553.75 L418.75 563.75 L410 570 L407.5 578 L408 585 L413.75 583.75 L432.5 578.75 L450 566 L457.5 556 L460 546 L455 570 L457 585 L465 580 L473.75 563.75 L476 545 L476 524 L457.5 529 Z" fill="#f0c96c" stroke="#3a3428" stroke-width="0.7"/><path d="M397 546 Q389 550 389 561 M400 545 Q393 551 392 558 M412 568 Q406 575 408 586 M415 567 Q409 576 411 584 M457 566 Q453 575 458 586 M460 567 Q457 576 460 583" fill="none" stroke="#999" stroke-width="0.9"/><path d="M447 535 Q438 548 434 553 M460 546 Q452 540 447 535" fill="none" stroke="#6a5a3a" stroke-width="0.5"/></g><g transform="translate(952 0) scale(-1 1)"><path d="M443.75 525 L438 532 L431 538.75 L422.5 541.9 L403.75 543 L397.5 546 L392 552 L391 560 L396 553 L410 557.5 L431 553.75 L433.75 553.75 L418.75 563.75 L410 570 L407.5 578 L408 585 L413.75 583.75 L432.5 578.75 L450 566 L457.5 556 L460 546 L455 570 L457 585 L465 580 L473.75 563.75 L476 545 L476 524 L457.5 529 Z" fill="#f0c96c" stroke="#3a3428" stroke-width="0.7"/><path d="M397 546 Q389 550 389 561 M400 545 Q393 551 392 558 M412 568 Q406 575 408 586 M415 567 Q409 576 411 584 M457 566 Q453 575 458 586 M460 567 Q457 576 460 583" fill="none" stroke="#999" stroke-width="0.9"/><path d="M447 535 Q438 548 434 553 M460 546 Q452 540 447 535" fill="none" stroke="#6a5a3a" stroke-width="0.5"/></g><path d="M433 473 L438 476 Q446 466 458 469.7 L474 479.7 L476 527 Q460 530 445 525 L438 484 Z" fill="#2c2c2c"/><path d="M520 473 L517 477.7 Q507 466 495.8 467 L478 478.4 L477 527 Q494 529 509 523 L515 484 Z" fill="#2c2c2c"/><path d="M438 476 Q446 466 458 469.7 Q467 473 474 479.7 M445 525 Q458 530 475 524 M479 478.4 Q487 470 495.8 467 Q508 466 517 477.7 M478 524 Q494 530 509 523" fill="none" stroke="#b8b8b8" stroke-width="2.2"/><path d="M439 480 Q441 505 445 525 M441 484 Q444 500 446.4 512 M465 478 Q462 500 469 522 M516 480 Q512 505 509 523 M489 479 Q497 499 486.4 522" fill="none" stroke="#a8a8a8" stroke-width="1.3"/><circle cx="449" cy="476.4" r="5.3" fill="#b8b8b8"/><circle cx="449.7" cy="476.79999999999995" r="3" fill="#1c1c1c"/><circle cx="454.4" cy="521.8" r="5.3" fill="#b8b8b8"/><circle cx="455.09999999999997" cy="522.1999999999999" r="3" fill="#1c1c1c"/><circle cx="502.4" cy="475" r="5.8" fill="#b8b8b8"/><circle cx="503.09999999999997" cy="475.4" r="3.5" fill="#1c1c1c"/><circle cx="497" cy="521.8" r="5.3" fill="#b8b8b8"/><circle cx="497.7" cy="522.1999999999999" r="3" fill="#1c1c1c"/><path d="M476.4 478 V589" stroke="#dcd6f2" stroke-width="2.6"/><path d="M431 134.6 Q402 140 391.5 152.6 Q386 170 386 202.8 L427.4 213.6 L416.7 177.7 L423.8 141.8 Z" fill="#fff" stroke="#333" stroke-width="0.8"/><path d="M385 202 L427 210 L426 219 L384 211 Z" fill="#fff" stroke="#333" stroke-width="0.7"/><path d="M528 134.6 Q555 140 563.8 149 Q568 170 569 202.8 L529.7 213.6 L537 177.7 L531.5 141.8 Z" fill="#fff" stroke="#333" stroke-width="0.8"/><path d="M569 202 L529.7 210 L530 219 L569.5 212 Z" fill="#fff" stroke="#333" stroke-width="0.7"/><path d="M431 134.6 L445 133 L476 224 L508 133 L528 134.6 L531.5 141.8 L537 177.7 L529.7 213.6 L521.5 222 L517 250 L525.8 270 L527.6 280.4 L490 297 L476 282 L462 298 L423.4 277.8 L428 270 L435 250 L427.4 213.6 L416.7 177.7 L423.8 141.8 Z" fill="url(#vg)" stroke="#222" stroke-width="0.9"/><path d="M431 134.6 L445 134 L443.6 141.8 L450.7 177.7 L472 206 L477 225 L476 227 L450.7 206 L434.6 177.7 L427 141.8 Z" fill="#303030"/><path d="M524 134.6 L508 134 L508 141.8 L502.8 177.7 L479.5 206 L476 225 L477 227 L502.8 206 L520.8 177.7 L523 145 Z" fill="#303030"/><path d="M445 134 L443.6 141.8 L450.7 177.7 L472 206 L476 224 L479.5 206 L502.8 177.7 L508 141.8 L508 134 Z" fill="#fff"/><path d="M445 132 L446 145 L467 160 L476 156 Z M507 132 L506 145 L485 160 L476 156 Z" fill="#fff" stroke="#333" stroke-width="0.6"/><path d="M443.6 141.8 L450.7 177.7 L472 206 L476 224 L479.5 206 L502.8 177.7 L508 141.8" fill="none" stroke="#444" stroke-width="0.5"/><path d="M465 159 L476 155 L489 159 L483 173 L470 173 Z" fill="#15154f" stroke="#111" stroke-width="0.5"/><path d="M470 173 L483 173 L490 210 L477 226 L465 210 Z" fill="#15154f" stroke="#111" stroke-width="0.5"/><path d="M471 178 Q476 186 481 178 M472 182 Q476 192 480 182" fill="none" stroke="#c8c8d8" stroke-width="0.6"/><circle cx="476" cy="230" r="2.6" fill="#a8a8b8" stroke="#555" stroke-width="0.5"/><circle cx="476" cy="250" r="2.6" fill="#a8a8b8" stroke="#555" stroke-width="0.5"/><circle cx="476" cy="266" r="2.6" fill="#a8a8b8" stroke="#555" stroke-width="0.5"/><path d="M433 255 L453 262 L452 268 L432 262 Z M499 262 L520 255 L521 262 L500 268 Z" fill="#9a9a9a" stroke="#333" stroke-width="0.6"/><path d="M447 225 Q452 250 448 275 M505 225 Q500 250 504 275" fill="none" stroke="#555" stroke-width="0.5"/><path d="M470 79 Q476 78.5 482 79 Q492 83 497 90 Q500 96 500 102 Q501 108 503 112 Q505 116 507.5 119.5 Q504 120 502.5 121 Q503 123 504 126 L506 133 Q500 140 493.8 147 L476 156 L459.7 147 Q452 140 446 133 L448 126 Q449 123 449.5 121 Q448 120 444.5 119.5 Q447 116 449 112 Q451 108 452 102 Q452 96 455 90 Q460 83 470 79 Z" fill="#fff" stroke="#333" stroke-width="0.7"/><ellipse cx="476" cy="124" rx="24" ry="13" fill="url(#nk)"/><ellipse cx="476" cy="145" rx="10" ry="7" fill="url(#nk)" opacity="0.8"/><path d="M460 100 L471 100 L470 110 L462 112.5 L457.3 111 Q457 104 460 100 Z M492 100 L481 100 L482 110 L490 112.5 L494.7 111 Q495 104 492 100 Z" fill="#c8c8cc" stroke="#777" stroke-width="0.4"/><path d="M471 98.5 Q476 96 481 98.5 L483.5 104 L489.7 110.6 L482 115.5 L476 122.3 L470 115.5 L463.4 110.6 L468.5 104 Z" fill="#f0c96c" stroke="#8a6a30" stroke-width="0.5"/><path d="M460.5 98.5 Q465 96.5 469.8 99.5 Q466 102.5 462 101.5 Z M491.5 98.5 Q487 96.5 482.2 99.5 Q486 102.5 490 101.5 Z" fill="#b89a50" stroke="#2a2a2a" stroke-width="0.8"/><circle cx="466" cy="99.6" r="1.3" fill="#222"/><circle cx="486" cy="99.6" r="1.3" fill="#222"/><path d="M432 137.5 Q405 141 397.5 149.5 Q391 158 391.5 167.6 L390 182.6 M520 137.5 Q550 141 558 150 Q564 160 564 170 L566 185" fill="none" stroke="#2a2a48" stroke-width="1.3"/><path d="M398 146 Q386 165 389 200 M394 152 Q384 175 387 205 M402 160 Q395 185 400 210 M410 150 Q420 170 418 200 M556 146 Q570 165 567 200 M560 152 Q572 175 569 205 M552 160 Q560 185 556 210 M545 150 Q535 170 537 200 M430 185 Q450 175 462 195 M440 200 Q455 190 470 205 M485 195 Q500 180 515 190 M490 205 Q505 195 520 200 M432 190 Q445 215 470 222 M520 190 Q508 215 485 222" fill="none" stroke="#7a78d8" stroke-width="0.6" opacity="0.75"/><path d="M364 300 Q360 360 366 430 M370 290 Q366 360 371 440 M378 300 Q376 370 378 445 M586 300 Q590 360 586 430 M580 290 Q584 360 579 440 M574 300 Q576 370 574 445 M392 235 Q385 270 380 300 M560 235 Q567 270 572 300" fill="none" stroke="#3e3230" stroke-width="0.6"/><path d="M356 320 Q354 380 362 430 Q366 445 372 452 M597 320 Q599 380 592 430 Q588 445 582 452" fill="none" stroke="#aaa" stroke-width="0.5" opacity="0.6"/><path d="M437 470 Q445 474 455 470 M498 468 Q508 474 518 470" fill="none" stroke="#ccc" stroke-width="0.8"/><path d="M500 190 L508 175 L510 180 Z" fill="#c8c8d0"/><path d="M476 60 V297" stroke="#7a78d8" stroke-width="0.6" fill="none" opacity="0.65"/><path d="M469 77.5 H483 M471 76 H481" stroke="#7a78d8" stroke-width="0.5" opacity="0.6"/><path d="M476 297 Q479 340 476 375 M476 410 V478" stroke="#2c2458" stroke-width="1.2" fill="none"/><path d="M476 375 V410" stroke="#9890d0" stroke-width="0.8" fill="none"/><path d="M413 343.5 L473.5 413.6 M443.4 403.6 L533.6 306.7 M466.8 313.4 Q470 360 490 407 M420 300 Q430 360 470 400" fill="none" stroke="#5a5aa0" stroke-width="0.6" opacity="0.8"/><ellipse cx="476.8" cy="305" rx="10" ry="15" fill="none" stroke="#5a5aa0" stroke-width="0.6" opacity="0.8"/><path d="M392 160 Q380 190 392 215 M398 150 Q388 180 396 205 M560 150 Q572 180 566 210 M555 160 Q565 185 560 205 M420 175 Q440 165 470 185 M485 190 Q510 170 540 180 M430 200 Q455 190 470 210 M490 205 Q515 195 530 205" fill="none" stroke="#7a78d8" stroke-width="0.6" opacity="0.7"/></g></svg>
</body></html>
